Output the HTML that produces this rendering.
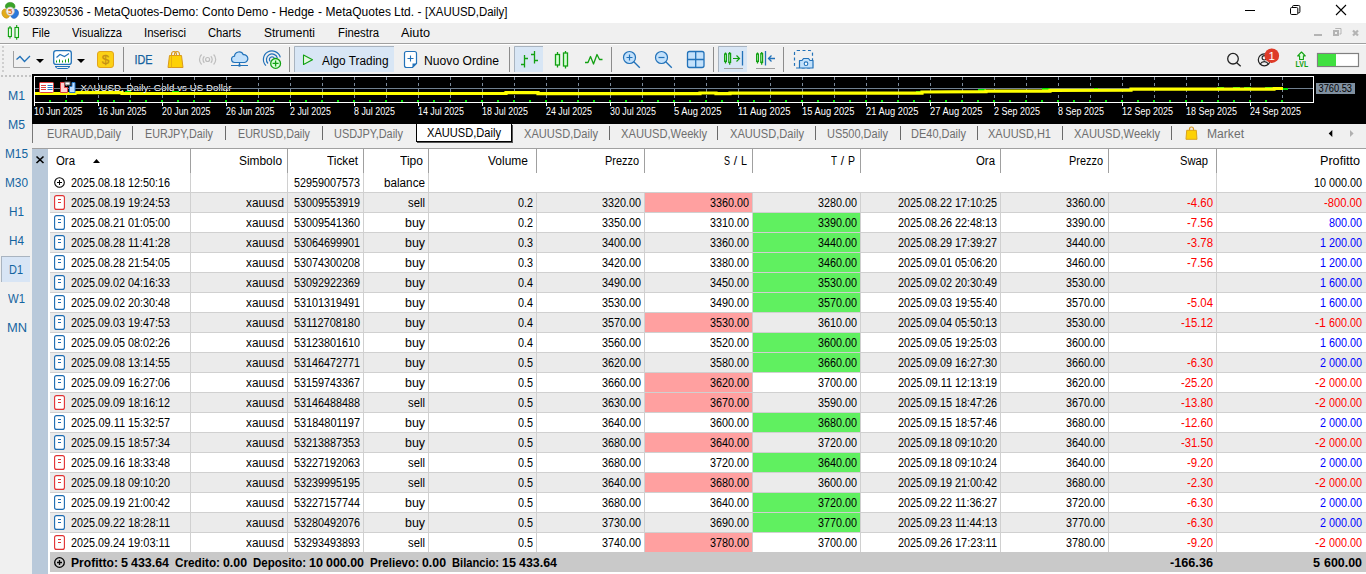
<!DOCTYPE html>
<html><head><meta charset="utf-8"><title>5039230536 - MetaQuotes-Demo</title>
<style>
html,body{margin:0;padding:0}
body{width:1366px;height:574px;overflow:hidden;background:#f0f0f0;font-family:"Liberation Sans",sans-serif;font-size:12px;color:#000;position:relative}
.abs,.abs *{position:absolute}
div{box-sizing:border-box}
#title{left:0;top:0;width:1366px;height:23px;background:#fff}
#title .t{left:23px;top:5px;line-height:14px;white-space:nowrap}
#menu{left:0;top:23px;width:1366px;height:20px;background:#f0f0f0}
#menu .m{top:3px;line-height:14px;white-space:nowrap}
#side{left:0;top:74px;width:32px;height:500px;background:#f0f0f0}
#side .sl2{left:0;width:32px;text-align:center;color:#1464a0;line-height:14px}
#chart{left:32px;top:74px;width:1334px;height:50px;background:#000}
#tabs{left:32px;top:124px;width:1334px;height:24px;background:#f0f0f0}
#tabs .tab{top:3px;line-height:14px;color:#6e6e6e;white-space:nowrap}
#tabs i{top:2px;width:1px;height:14px;background:#6a6a6a}
#strip{left:32px;top:148px;width:17px;border-top:1px solid #a0a0a0;height:426px;background:#b9c9da}
#gridbg{left:48px;top:149px;width:2px;height:425px;background:#fff}
#grid{left:49px;top:148px;width:1317px;height:426px;background:#fff;border-top:1px solid #a0a0a0}
.row{left:0;width:1317px;height:20px;border-bottom:1px solid #d0d0d0}
.row.alt{background:#ebebeb}
.c{top:0;height:19px;line-height:21px;text-align:right;white-space:nowrap;padding-right:3.500px}
.v{top:0;width:1px;height:19px;background:#d0d0d0}
.w{display:inline-block;position:static !important;white-space:pre}
.s{display:inline-block;position:static !important;white-space:pre;transform-origin:0 50%}
.red{color:#f00}.blue{color:#00f}
.sl{background:#ffa0a0}.tp{background:#60f060}
</style></head><body>

<div id="title" class="abs">
<svg style="left:0;top:0" width="22" height="23" viewBox="0 0 22 23"><ellipse cx="10.200" cy="6.300" rx="4.800" ry="3.900" fill="#3aa528" stroke="#2c8a1e" stroke-width=".6"/><ellipse cx="5.800" cy="13.600" rx="3.700" ry="4.700" fill="#e3ac1a" stroke="#c08c12" stroke-width=".6" transform="rotate(-25 5.800 13.600)"/><ellipse cx="14.600" cy="13.800" rx="3.700" ry="4.700" fill="#2a78dc" stroke="#1e5cb4" stroke-width=".6" transform="rotate(25 14.600 13.800)"/><circle cx="10.200" cy="11.300" r="4.200" fill="#f4f0ec" stroke="#b8b0a8" stroke-width=".7"/><text x="10.200" y="14.200" font-size="8" font-weight="bold" text-anchor="middle" fill="#e0741a" font-family="Liberation Sans,sans-serif" style="position:static">5</text></svg>
<div class="t"><span class="w" style="width:60.32px;"><span class="s" style="transform:scaleX(0.904)">5039230536</span></span><span class="w" style="width:3.016px;"> </span><span class="w" style="width:5.027px;text-align:center;">-</span><span class="w" style="width:3.016px;"> </span><span class="w" style="width:104.6px;"><span class="s" style="transform:scaleX(0.999)">MetaQuotes-Demo:</span></span><span class="w" style="width:3.016px;"> </span><span class="w" style="width:32.17px;"><span class="s" style="transform:scaleX(1.005)">Conto</span></span><span class="w" style="width:3.016px;"> </span><span class="w" style="width:31.17px;"><span class="s" style="transform:scaleX(0.974)">Demo</span></span><span class="w" style="width:3.016px;"> </span><span class="w" style="width:5.027px;text-align:center;">-</span><span class="w" style="width:3.016px;"> </span><span class="w" style="width:35.19px;"><span class="s" style="transform:scaleX(0.995)">Hedge</span></span><span class="w" style="width:3.016px;"> </span><span class="w" style="width:5.027px;text-align:center;">-</span><span class="w" style="width:3.016px;"> </span><span class="w" style="width:65.35px;"><span class="s" style="transform:scaleX(1.000)">MetaQuotes</span></span><span class="w" style="width:3.016px;"> </span><span class="w" style="width:20.11px;"><span class="s" style="transform:scaleX(1.005)">Ltd.</span></span><span class="w" style="width:3.016px;"> </span><span class="w" style="width:5.027px;text-align:center;">-</span><span class="w" style="width:3.016px;"> </span><span class="w" style="width:82.44px;"><span class="s" style="transform:scaleX(0.951)">[XAUUSD,Daily]</span></span></div>
<svg style="left:1240px;top:0" width="126" height="23" viewBox="1240 0 126 23"><path d="M1245 10.500h10" stroke="#000" stroke-width="1" fill="none"/><rect x="1290.500" y="7.500" width="7.300" height="7" rx="1.200" fill="none" stroke="#000" stroke-width="1"/><path d="M1292.500 7.500v-.8a1.200 1.200 0 0 1 1.200 -1.200h5a1.200 1.200 0 0 1 1.200 1.200v5a1.200 1.200 0 0 1 -1.200 1.200h-.8" stroke="#000" stroke-width="1" fill="none"/><path d="M1336 5l10 10M1346 5l-10 10" stroke="#000" stroke-width="1.100" fill="none"/></svg>
</div>
<div id="menu" class="abs">
<svg style="left:0;top:0" width="24" height="20" viewBox="0 23 24 20"><g fill="#e4ffe4" stroke="#12a012" stroke-width="1.100"><path d="M10 26v2M10 36.500v2M16.700 25v2.500M16.700 37.500v2.200" fill="none"/><rect x="8.400" y="28" width="3" height="8.500"/><rect x="15" y="27.500" width="3.500" height="10"/></g></svg>
<div class="m" style="left:32px"><span class="w" style="width:18px;"><span class="s" style="transform:scaleX(0.931)">File</span></span></div>
<div class="m" style="left:72px"><span class="w" style="width:50px;"><span class="s" style="transform:scaleX(0.929)">Visualizza</span></span></div>
<div class="m" style="left:144px"><span class="w" style="width:42px;"><span class="s" style="transform:scaleX(0.954)">Inserisci</span></span></div>
<div class="m" style="left:208px"><span class="w" style="width:33px;"><span class="s" style="transform:scaleX(0.934)">Charts</span></span></div>
<div class="m" style="left:264px"><span class="w" style="width:51px;"><span class="s" style="transform:scaleX(0.993)">Strumenti</span></span></div>
<div class="m" style="left:338px"><span class="w" style="width:41px;"><span class="s" style="transform:scaleX(0.946)">Finestra</span></span></div>
<div class="m" style="left:401px"><span class="w" style="width:29px;"><span class="s" style="transform:scaleX(1.060)">Aiuto</span></span></div>
<svg style="left:1306px;top:0" width="60" height="20" viewBox="1306 23 60 20"><rect x="1314" y="34" width="8" height="2" fill="#b4b4b4"/><path d="M1334 31h4v4h-4z" fill="none" stroke="#b4b4b4" stroke-width="2"/><path d="M1335.500 29v-.5h5.500v5.500h-1.500" fill="none" stroke="#b4b4b4" stroke-width="1"/><path d="M1353 30.500l5 5M1358 30.500l-5 5" fill="none" stroke="#b4b4b4" stroke-width="2.200"/></svg>
</div>
<svg class="abs" style="left:0;top:44px" width="1366" height="30" viewBox="0 44 1366 30" font-family="Liberation Sans, sans-serif">
<rect x="2" y="46" width="2" height="2" fill="#cfcfcf"/>
<rect x="2" y="50" width="2" height="2" fill="#cfcfcf"/>
<rect x="2" y="54" width="2" height="2" fill="#cfcfcf"/>
<rect x="2" y="58" width="2" height="2" fill="#cfcfcf"/>
<rect x="2" y="62" width="2" height="2" fill="#cfcfcf"/>
<rect x="2" y="66" width="2" height="2" fill="#cfcfcf"/>
<rect x="2" y="70" width="2" height="2" fill="#cfcfcf"/>
<rect x="123" y="47" width="1" height="25" fill="#8c8c8c"/>
<rect x="289" y="47" width="1" height="25" fill="#8c8c8c"/>
<rect x="509" y="47" width="1" height="25" fill="#8c8c8c"/>
<rect x="611" y="47" width="1" height="25" fill="#8c8c8c"/>
<rect x="713" y="47" width="1" height="25" fill="#8c8c8c"/>
<rect x="783" y="47" width="1" height="25" fill="#8c8c8c"/>
<rect x="294" y="46" width="100" height="26" fill="#d8e6f5"/>
<path d="M294.5 72V46.500H394" fill="none" stroke="#a9b4c0" stroke-width="1"/>
<rect x="514" y="46" width="29" height="26" fill="#d8e6f5"/>
<path d="M514.5 72V46.500H543" fill="none" stroke="#a9b4c0" stroke-width="1"/>
<rect x="718" y="46" width="29" height="26" fill="#d8e6f5"/>
<path d="M718.5 72V46.500H747" fill="none" stroke="#a9b4c0" stroke-width="1"/>
<path d="M13.500 51v16.500H30" fill="none" stroke="#a0a0a0" stroke-width="1"/>
<path d="M16.500 59.500L20 56.500L24.500 61.500L30 56" fill="none" stroke="#2272b9" stroke-width="1.300"/>
<path d="M36 59h8l-4 4z" fill="#000"/>
<rect x="53.700" y="50.600" width="17.600" height="13.800" rx="2.500" fill="#fff" stroke="#2272b9" stroke-width="1.300"/>
<path d="M55 66.500H70M57.500 68.500H67.500M55 66.500L57.500 68.500M70 66.500L67.500 68.500" fill="none" stroke="#2272b9" stroke-width="1"/>
<path d="M56.500 57.500L60 54.500L64.500 56.500L69 53.500" fill="none" stroke="#2272b9" stroke-width="1.100"/>
<rect x="56" y="60.5" width="1" height="2" fill="#12a012"/>
<rect x="59" y="59.5" width="1" height="3" fill="#12a012"/>
<rect x="62" y="60.5" width="1" height="2" fill="#12a012"/>
<rect x="65" y="59.5" width="1" height="3" fill="#12a012"/>
<rect x="68" y="58.5" width="1" height="4" fill="#12a012"/>
<path d="M77 59h8l-4 4z" fill="#000"/>
<rect x="97.500" y="51.500" width="16" height="16" rx="2.500" fill="#fcd116" stroke="#e3a51c" stroke-width="1"/>
<text x="105.500" y="64.300" font-size="13.500" text-anchor="middle" fill="#c48f16" stroke="#c48f16" stroke-width=".3">$</text>
<text x="134.500" y="64" font-size="12" fill="#15629f" stroke="#15629f" stroke-width=".25" textLength="18" lengthAdjust="spacingAndGlyphs">IDE</text>
<path d="M171.500 58v-3.500a2.500 3 0 0 1 5 0v3.500M174.500 58v-3.500a2.500 3 0 0 1 5 0v3.500" fill="none" stroke="#d99a1e" stroke-width="1.100"/>
<path d="M169.500 55.500h12l1.500 12h-15z" fill="#fdd106" stroke="#d99a1e" stroke-width="1"/>
<path d="M171.500 56v11.500" stroke="#e6b010" stroke-width="1" fill="none"/>
<g fill="none" stroke="#bdbdbd" stroke-width="1.200"><circle cx="207.600" cy="59.500" r="2"/><path d="M204.400 56.200a4.600 4.600 0 0 0 0 6.600M210.800 56.200a4.600 4.600 0 0 1 0 6.600M201.600 54.500a7 7 0 0 0 0 10M213.600 54.500a7 7 0 0 1 0 10"/></g>
<path d="M235 62.500a3.200 3.200 0 0 1 -.5 -6.400a4.600 4.600 0 0 1 8.800 -1.400a3.900 3.900 0 0 1 1.200 7.800z" fill="#c3e1fb" stroke="#2272b9" stroke-width="1.200"/>
<path d="M239.500 62.500v3M231 65.500h17" stroke="#2272b9" stroke-width="1.200" fill="none"/><circle cx="239.500" cy="65.500" r="1.300" fill="#2272b9"/>
<g fill="none" stroke="#2272b9" stroke-width="1.200"><path d="M265.900 65.600A8.600 8.600 0 1 1 280.300 57.300"/><path d="M268 63.500A5.600 5.600 0 1 1 277.400 58.050"/><path d="M270.200 61.300A2.600 2.600 0 1 1 274.500 58.800"/></g>
<circle cx="275.600" cy="63.400" r="4.900" fill="#d8ffd8" stroke="#12a012" stroke-width="1.300"/><path d="M272.600 63.400h6M275.600 60.400v6" stroke="#12a012" stroke-width="1.300"/>
<path d="M303.500 55v9.500l9 -4.750z" fill="#e4f8e0" stroke="#12a012" stroke-width="1.100" stroke-linejoin="round"/>
<text x="322" y="64.600" font-size="12.500" fill="#000" textLength="66.500" lengthAdjust="spacingAndGlyphs">Algo Trading</text>
<path d="M406.500 51.500h8a2 2 0 0 1 2 2v10l-4 4h-6a2 2 0 0 1 -2 -2v-12a2 2 0 0 1 2 -2z" fill="#fff" stroke="#2272b9" stroke-width="1.200"/><path d="M412.500 67.500v-4h4z" fill="#2272b9"/>
<path d="M407.500 58.500h6M410.500 55.500v6" stroke="#2272b9" stroke-width="1.100" fill="none"/>
<text x="424" y="64.600" font-size="12.500" fill="#000" textLength="75" lengthAdjust="spacingAndGlyphs">Nuovo Ordine</text>
<path d="M524.500 55v12.500M521 64.500h3.500M524.500 58.500h3.500M534.500 51v12.500M531 54.500h3.500M534.500 60.500h3.500" fill="none" stroke="#12a012" stroke-width="1.300"/>
<g fill="#d5ffd5" stroke="#12a012" stroke-width="1.300"><path d="M557.500 52v2.500M557.500 65v2.500M565.500 51v2M565.500 66v2.500" fill="none"/><rect x="555.500" y="54.500" width="4" height="10.500"/><rect x="563.500" y="53" width="4" height="13"/></g>
<path d="M585 62.500h3l2.500 -6l3 7.500l3.500 -9.500l2.500 5h3" fill="none" stroke="#12a012" stroke-width="1.300" stroke-linejoin="round"/>
<circle cx="629.5" cy="57.500" r="6" fill="#c3e1fb" stroke="#2272b9" stroke-width="1.200"/>
<path d="M633.8 61.800l6 6" stroke="#2272b9" stroke-width="1.300" fill="none"/>
<path d="M626.5 57.500h6M629.5 54.500v6" stroke="#2272b9" stroke-width="1.200" fill="none"/>
<circle cx="661.5" cy="57.500" r="6" fill="#c3e1fb" stroke="#2272b9" stroke-width="1.200"/>
<path d="M665.8 61.800l6 6" stroke="#2272b9" stroke-width="1.300" fill="none"/>
<path d="M658.5 57.500h6" stroke="#2272b9" stroke-width="1.200" fill="none"/>
<rect x="687.500" y="51.500" width="16.500" height="16" rx="2" fill="#c3e1fb" stroke="#2272b9" stroke-width="1.300"/><path d="M695.700 51.500v16M687.500 59.500h16.500" stroke="#2272b9" stroke-width="1.300"/>
<g fill="#d5ffd5" stroke="#12a012" stroke-width="1.200"><path d="M725.5 52.500v1.500M725.5 61.500v2M729.7 52v1.500M729.7 62.500v2.200" fill="none"/><rect x="724.6" y="54" width="1.800" height="7.500"/><rect x="728.8" y="53.500" width="1.800" height="9"/></g>
<path d="M733 58.500h6M736.500 55.500l3 3l-3 3" fill="none" stroke="#12a012" stroke-width="1.200"/>
<path d="M742.500 51v14.500" stroke="#2272b9" stroke-width="1.300"/><path d="M724 68.500h19" stroke="#a0a0a0" stroke-width="1"/>
<g fill="#d5ffd5" stroke="#12a012" stroke-width="1.200"><path d="M757.5 52.500v1.500M757.5 61.500v2M761.7 52v1.500M761.7 62.500v2.200" fill="none"/><rect x="756.6" y="54" width="1.800" height="7.500"/><rect x="760.8" y="53.500" width="1.800" height="9"/></g>
<path d="M765.500 51v14.500M775 58.500h-6.500M771.500 55.500l-3 3l3 3" fill="none" stroke="#2272b9" stroke-width="1.300"/><path d="M756 68.500h19" stroke="#a0a0a0" stroke-width="1"/>
<rect x="794.500" y="50.500" width="18" height="17.500" rx="2.500" fill="none" stroke="#2272b9" stroke-width="1.200" stroke-dasharray="3 2.500"/>
<path d="M799.500 60.500h2.500l1.500 -2h5l1.500 2h3v7.500h-13.500z" fill="#c3e1fb" stroke="#2272b9" stroke-width="1.200" stroke-linejoin="round"/><circle cx="806" cy="63.700" r="1.800" fill="#fff" stroke="#2272b9" stroke-width="1.100"/>
<circle cx="1233" cy="58.700" r="5.300" fill="none" stroke="#222" stroke-width="1.300"/><path d="M1236.700 62.700l4 3.500" stroke="#222" stroke-width="1.300"/>
<circle cx="1264.300" cy="59.800" r="6" fill="none" stroke="#222" stroke-width="1.200"/><circle cx="1264.300" cy="57.800" r="2.200" fill="none" stroke="#222" stroke-width="1.100"/><path d="M1260.300 64.100a4.500 4.500 0 0 1 8 0" fill="none" stroke="#222" stroke-width="1.100"/>
<circle cx="1271.800" cy="55.700" r="7.300" fill="#de3b28"/><text x="1271.600" y="60" font-size="11.500" text-anchor="middle" fill="#fff">1</text>
<path d="M1301.500 52l3.800 3.900h-1.900v3.600h-3.800v-3.600h-1.900z" fill="#dcffdc" stroke="#12a012" stroke-width="1.100" stroke-linejoin="round"/>
<text x="1295.600" y="67" font-size="8.200" font-weight="bold" fill="#12a012" textLength="12.600" lengthAdjust="spacingAndGlyphs">LVL</text>
<rect x="1317.500" y="53.500" width="41" height="13" fill="#fff" stroke="#808080" stroke-width="1.200"/><rect x="1318" y="54" width="18" height="12" fill="#40e040"/>
</svg>
<div class="abs" style="left:0;top:43px;width:1366px;height:1px;background:#a0a0a0"></div>
<div class="abs" style="left:0;top:44px;width:1366px;height:1px;background:#fff"></div>
<div id="side" class="abs">
<div style="left:1px;top:1px;width:30px;height:2px;background:repeating-linear-gradient(90deg,#c4c4c4 0 2px,transparent 2px 4px)"></div>
<div style="left:1px;top:182px;width:29px;height:26px;background:#d8e5f5;border-top:1px solid #a9b4c0;border-left:1px solid #a9b4c0"></div>
<div class="sl2" style="top:15px"><span class="w" style="width:17px;"><span class="s" style="transform:scaleX(1.020)">M1</span></span></div>
<div class="sl2" style="top:44px"><span class="w" style="width:17px;"><span class="s" style="transform:scaleX(1.020)">M5</span></span></div>
<div class="sl2" style="top:73px"><span class="w" style="width:23px;"><span class="s" style="transform:scaleX(0.985)">M15</span></span></div>
<div class="sl2" style="top:102px"><span class="w" style="width:23px;"><span class="s" style="transform:scaleX(0.985)">M30</span></span></div>
<div class="sl2" style="top:131px"><span class="w" style="width:15px;"><span class="s" style="transform:scaleX(0.978)">H1</span></span></div>
<div class="sl2" style="top:160px"><span class="w" style="width:15px;"><span class="s" style="transform:scaleX(0.978)">H4</span></span></div>
<div class="sl2" style="top:189px"><span class="w" style="width:14px;"><span class="s" style="transform:scaleX(0.913)">D1</span></span></div>
<div class="sl2" style="top:218px"><span class="w" style="width:17px;"><span class="s" style="transform:scaleX(0.944)">W1</span></span></div>
<div class="sl2" style="top:247px"><span class="w" style="width:20px;"><span class="s" style="transform:scaleX(1.072)">MN</span></span></div>
</div>
<svg class="abs" style="left:32px;top:74px" width="1334" height="50" viewBox="32 74 1334 50" font-family="Liberation Sans, sans-serif">
<rect x="32" y="74" width="1334" height="50" fill="#000"/>
<path d="M66.5 77V102M98.5 77V102M130.5 77V102M162.5 77V102M194.5 77V102M226.5 77V102M258.5 77V102M290.5 77V102M322.5 77V102M354.5 77V102M386.5 77V102M418.5 77V102M450.5 77V102M482.5 77V102M514.5 77V102M546.5 77V102M578.5 77V102M610.5 77V102M642.5 77V102M674.5 77V102M706.5 77V102M738.5 77V102M770.5 77V102M802.5 77V102M834.5 77V102M866.5 77V102M898.5 77V102M930.5 77V102M962.5 77V102M994.5 77V102M1026.5 77V102M1058.5 77V102M1090.5 77V102M1122.5 77V102M1154.5 77V102M1186.5 77V102M1218.5 77V102M1250.5 77V102M1282.5 77V102" stroke="#7c8a9a" stroke-width="1" stroke-dasharray="3 3" fill="none"/>
<path d="M35 88.500H1313" stroke="#708090" stroke-width="1"/>
<rect x="125" y="91" width="6" height="2" fill="#00e000"/>
<rect x="172" y="91" width="7" height="2" fill="#00e000"/>
<rect x="505" y="91" width="8" height="2" fill="#00e000"/>
<rect x="540" y="92" width="8" height="2" fill="#00e000"/>
<rect x="700" y="92" width="8" height="2" fill="#00e000"/>
<rect x="718" y="92" width="6" height="2" fill="#00e000"/>
<rect x="916" y="91" width="8" height="2" fill="#00e000"/>
<rect x="978" y="89" width="8" height="2" fill="#00e000"/>
<rect x="1042" y="88" width="8" height="2" fill="#00e000"/>
<rect x="1094" y="88" width="4" height="2" fill="#00e000"/>
<rect x="1217" y="87" width="7" height="2" fill="#00e000"/>
<rect x="1233" y="87" width="7" height="2" fill="#00e000"/>
<rect x="1244" y="87" width="7" height="2" fill="#00e000"/>
<rect x="1265" y="87" width="7" height="2" fill="#00e000"/>
<rect x="1283" y="88" width="5" height="2" fill="#00e000"/>
<polyline points="35,93.5 75,93.5 75,92.7 122,92.7 122,93.5 506,93.5 506,92.6 538,92.6 538,93.6 700,93.6 700,93 716,93 716,93.6 730,93.6 730,93.2 922,93.2 922,92 986,91.6 986,91.2 1050,91.2 1050,90.4 1131,90.2 1131,89.2 1274,89.2 1274,88.5 1283,88.5" fill="none" stroke="#ffff00" stroke-width="3.200"/>
<rect x="34.500" y="76.500" width="1279" height="26" fill="none" stroke="#fff" stroke-width="1"/>
<rect x="49" y="100" width="2" height="2" fill="#00e000"/>
<rect x="65" y="100" width="2" height="2" fill="#00e000"/>
<rect x="81" y="100" width="2" height="2" fill="#00e000"/>
<rect x="97" y="100" width="2" height="2" fill="#00e000"/>
<rect x="113" y="100" width="2" height="2" fill="#00e000"/>
<rect x="129" y="100" width="2" height="2" fill="#00e000"/>
<rect x="145" y="100" width="2" height="2" fill="#00e000"/>
<rect x="161" y="100" width="2" height="2" fill="#00e000"/>
<rect x="177" y="100" width="2" height="2" fill="#00e000"/>
<rect x="193" y="100" width="2" height="2" fill="#00e000"/>
<rect x="209" y="100" width="2" height="2" fill="#00e000"/>
<rect x="225" y="100" width="2" height="2" fill="#00e000"/>
<rect x="241" y="100" width="2" height="2" fill="#00e000"/>
<rect x="257" y="100" width="2" height="2" fill="#00e000"/>
<rect x="273" y="100" width="2" height="2" fill="#00e000"/>
<rect x="289" y="100" width="2" height="2" fill="#00e000"/>
<rect x="305" y="100" width="2" height="2" fill="#00e000"/>
<rect x="321" y="100" width="2" height="2" fill="#00e000"/>
<rect x="337" y="100" width="2" height="2" fill="#00e000"/>
<rect x="353" y="100" width="2" height="2" fill="#00e000"/>
<rect x="369" y="100" width="2" height="2" fill="#00e000"/>
<rect x="385" y="100" width="2" height="2" fill="#00e000"/>
<rect x="401" y="100" width="2" height="2" fill="#00e000"/>
<rect x="417" y="100" width="2" height="2" fill="#00e000"/>
<rect x="433" y="100" width="2" height="2" fill="#00e000"/>
<rect x="449" y="100" width="2" height="2" fill="#00e000"/>
<rect x="465" y="100" width="2" height="2" fill="#00e000"/>
<rect x="481" y="100" width="2" height="2" fill="#00e000"/>
<rect x="497" y="100" width="2" height="2" fill="#00e000"/>
<rect x="513" y="100" width="2" height="2" fill="#00e000"/>
<rect x="529" y="100" width="2" height="2" fill="#00e000"/>
<rect x="545" y="100" width="2" height="2" fill="#00e000"/>
<rect x="561" y="100" width="2" height="2" fill="#00e000"/>
<rect x="577" y="100" width="2" height="2" fill="#00e000"/>
<rect x="593" y="100" width="2" height="2" fill="#00e000"/>
<rect x="609" y="100" width="2" height="2" fill="#00e000"/>
<rect x="625" y="100" width="2" height="2" fill="#00e000"/>
<rect x="641" y="100" width="2" height="2" fill="#00e000"/>
<rect x="657" y="100" width="2" height="2" fill="#00e000"/>
<rect x="673" y="100" width="2" height="2" fill="#00e000"/>
<rect x="689" y="100" width="2" height="2" fill="#00e000"/>
<rect x="705" y="100" width="2" height="2" fill="#00e000"/>
<rect x="721" y="100" width="2" height="2" fill="#00e000"/>
<rect x="737" y="100" width="2" height="2" fill="#00e000"/>
<rect x="753" y="100" width="2" height="2" fill="#00e000"/>
<rect x="769" y="100" width="2" height="2" fill="#00e000"/>
<rect x="785" y="100" width="2" height="2" fill="#00e000"/>
<rect x="801" y="100" width="2" height="2" fill="#00e000"/>
<rect x="817" y="100" width="2" height="2" fill="#00e000"/>
<rect x="833" y="100" width="2" height="2" fill="#00e000"/>
<rect x="849" y="100" width="2" height="2" fill="#00e000"/>
<rect x="865" y="100" width="2" height="2" fill="#00e000"/>
<rect x="881" y="100" width="2" height="2" fill="#00e000"/>
<rect x="897" y="100" width="2" height="2" fill="#00e000"/>
<rect x="913" y="100" width="2" height="2" fill="#00e000"/>
<rect x="929" y="100" width="2" height="2" fill="#00e000"/>
<rect x="945" y="100" width="2" height="2" fill="#00e000"/>
<rect x="961" y="100" width="2" height="2" fill="#00e000"/>
<rect x="977" y="100" width="2" height="2" fill="#00e000"/>
<rect x="993" y="100" width="2" height="2" fill="#00e000"/>
<rect x="1009" y="100" width="2" height="2" fill="#00e000"/>
<rect x="1025" y="100" width="2" height="2" fill="#00e000"/>
<rect x="1041" y="100" width="2" height="2" fill="#00e000"/>
<rect x="1057" y="100" width="2" height="2" fill="#00e000"/>
<rect x="1073" y="100" width="2" height="2" fill="#00e000"/>
<rect x="1089" y="100" width="2" height="2" fill="#00e000"/>
<rect x="1105" y="100" width="2" height="2" fill="#00e000"/>
<rect x="1121" y="100" width="2" height="2" fill="#00e000"/>
<rect x="1137" y="100" width="2" height="2" fill="#00e000"/>
<rect x="1153" y="100" width="2" height="2" fill="#00e000"/>
<rect x="1169" y="100" width="2" height="2" fill="#00e000"/>
<rect x="1185" y="100" width="2" height="2" fill="#00e000"/>
<rect x="1201" y="100" width="2" height="2" fill="#00e000"/>
<rect x="1217" y="100" width="2" height="2" fill="#00e000"/>
<rect x="1233" y="100" width="2" height="2" fill="#00e000"/>
<rect x="1249" y="100" width="2" height="2" fill="#00e000"/>
<rect x="1265" y="100" width="2" height="2" fill="#00e000"/>
<rect x="1281" y="100" width="2" height="2" fill="#00e000"/>
<rect x="34" y="102" width="1" height="4" fill="#fff"/>
<text x="34" y="115" font-size="10" fill="#fff" textLength="48.5" lengthAdjust="spacingAndGlyphs">10 Jun 2025</text>
<rect x="98" y="102" width="1" height="4" fill="#fff"/>
<text x="98" y="115" font-size="10" fill="#fff" textLength="48.5" lengthAdjust="spacingAndGlyphs">16 Jun 2025</text>
<rect x="162" y="102" width="1" height="4" fill="#fff"/>
<text x="162" y="115" font-size="10" fill="#fff" textLength="48.5" lengthAdjust="spacingAndGlyphs">20 Jun 2025</text>
<rect x="226" y="102" width="1" height="4" fill="#fff"/>
<text x="226" y="115" font-size="10" fill="#fff" textLength="48.5" lengthAdjust="spacingAndGlyphs">26 Jun 2025</text>
<rect x="290" y="102" width="1" height="4" fill="#fff"/>
<text x="290" y="115" font-size="10" fill="#fff" textLength="41" lengthAdjust="spacingAndGlyphs">2 Jul 2025</text>
<rect x="354" y="102" width="1" height="4" fill="#fff"/>
<text x="354" y="115" font-size="10" fill="#fff" textLength="41" lengthAdjust="spacingAndGlyphs">8 Jul 2025</text>
<rect x="418" y="102" width="1" height="4" fill="#fff"/>
<text x="418" y="115" font-size="10" fill="#fff" textLength="46" lengthAdjust="spacingAndGlyphs">14 Jul 2025</text>
<rect x="482" y="102" width="1" height="4" fill="#fff"/>
<text x="482" y="115" font-size="10" fill="#fff" textLength="46" lengthAdjust="spacingAndGlyphs">18 Jul 2025</text>
<rect x="546" y="102" width="1" height="4" fill="#fff"/>
<text x="546" y="115" font-size="10" fill="#fff" textLength="46" lengthAdjust="spacingAndGlyphs">24 Jul 2025</text>
<rect x="610" y="102" width="1" height="4" fill="#fff"/>
<text x="610" y="115" font-size="10" fill="#fff" textLength="46" lengthAdjust="spacingAndGlyphs">30 Jul 2025</text>
<rect x="674" y="102" width="1" height="4" fill="#fff"/>
<text x="674" y="115" font-size="10" fill="#fff" textLength="47.5" lengthAdjust="spacingAndGlyphs">5 Aug 2025</text>
<rect x="738" y="102" width="1" height="4" fill="#fff"/>
<text x="738" y="115" font-size="10" fill="#fff" textLength="52.5" lengthAdjust="spacingAndGlyphs">11 Aug 2025</text>
<rect x="802" y="102" width="1" height="4" fill="#fff"/>
<text x="802" y="115" font-size="10" fill="#fff" textLength="52.5" lengthAdjust="spacingAndGlyphs">15 Aug 2025</text>
<rect x="866" y="102" width="1" height="4" fill="#fff"/>
<text x="866" y="115" font-size="10" fill="#fff" textLength="52.5" lengthAdjust="spacingAndGlyphs">21 Aug 2025</text>
<rect x="930" y="102" width="1" height="4" fill="#fff"/>
<text x="930" y="115" font-size="10" fill="#fff" textLength="52.5" lengthAdjust="spacingAndGlyphs">27 Aug 2025</text>
<rect x="994" y="102" width="1" height="4" fill="#fff"/>
<text x="994" y="115" font-size="10" fill="#fff" textLength="46" lengthAdjust="spacingAndGlyphs">2 Sep 2025</text>
<rect x="1058" y="102" width="1" height="4" fill="#fff"/>
<text x="1058" y="115" font-size="10" fill="#fff" textLength="46" lengthAdjust="spacingAndGlyphs">8 Sep 2025</text>
<rect x="1122" y="102" width="1" height="4" fill="#fff"/>
<text x="1122" y="115" font-size="10" fill="#fff" textLength="51" lengthAdjust="spacingAndGlyphs">12 Sep 2025</text>
<rect x="1186" y="102" width="1" height="4" fill="#fff"/>
<text x="1186" y="115" font-size="10" fill="#fff" textLength="51" lengthAdjust="spacingAndGlyphs">18 Sep 2025</text>
<rect x="1250" y="102" width="1" height="4" fill="#fff"/>
<text x="1250" y="115" font-size="10" fill="#fff" textLength="51" lengthAdjust="spacingAndGlyphs">24 Sep 2025</text>
<rect x="39.500" y="82.500" width="14" height="10" rx="1" fill="#fff" stroke="#e04040" stroke-width="1"/><path d="M41 85.500h5M41 87.500h5M41 89.500h5" stroke="#e04040" stroke-width="1"/><path d="M47.500 85.500h5M47.500 87.500h5M47.500 89.500h5" stroke="#2878c8" stroke-width="1"/>
<path d="M60.500 82.500h4v5h3v5h-7z" fill="#ffd0d0" stroke="#e04040" stroke-width="1"/><path d="M69.500 92.500v-6h2.500v-4h3v10z" fill="#c0e0ff" stroke="#2878c8" stroke-width="1"/><rect x="65" y="82" width="5" height="3" fill="#fff" stroke="#666" stroke-width="1"/>
<text x="80.500" y="91.300" font-size="9.600" fill="#fff" textLength="151" lengthAdjust="spacing">XAUUSD, Daily:  Gold vs US Dollar</text>
<path d="M80 88.500H232" stroke="#8090a0" stroke-width="1"/>
<rect x="1316" y="83" width="39" height="11" fill="#8090a0"/><text x="1318.500" y="92.300" font-size="10" fill="#000" textLength="33.500" lengthAdjust="spacingAndGlyphs">3760.53</text>
</svg>
<div id="tabs" class="abs">
<div style="left:0;top:0;width:1px;height:19px;background:#787878"></div>
<div style="left:384px;top:0;width:96px;height:18px;background:#fff;border:1px solid #000;border-top:none;box-shadow:1px 1px 0 #555"></div>
<div class="tab" style="left:15px;"><span class="w" style="width:74px;"><span class="s" style="transform:scaleX(0.917)">EURAUD,Daily</span></span></div>
<div class="tab" style="left:113px;"><span class="w" style="width:68px;"><span class="s" style="transform:scaleX(0.897)">EURJPY,Daily</span></span></div>
<div class="tab" style="left:206px;"><span class="w" style="width:72px;"><span class="s" style="transform:scaleX(0.892)">EURUSD,Daily</span></span></div>
<div class="tab" style="left:302px;"><span class="w" style="width:69px;"><span class="s" style="transform:scaleX(0.910)">USDJPY,Daily</span></span></div>
<div class="tab" style="left:395px;color:#000;top:2px;"><span class="w" style="width:74px;"><span class="s" style="transform:scaleX(0.925)">XAUUSD,Daily</span></span></div>
<div class="tab" style="left:492px;"><span class="w" style="width:74px;"><span class="s" style="transform:scaleX(0.925)">XAUUSD,Daily</span></span></div>
<div class="tab" style="left:589px;"><span class="w" style="width:86px;"><span class="s" style="transform:scaleX(0.930)">XAUUSD,Weekly</span></span></div>
<div class="tab" style="left:698px;"><span class="w" style="width:74px;"><span class="s" style="transform:scaleX(0.925)">XAUUSD,Daily</span></span></div>
<div class="tab" style="left:795px;"><span class="w" style="width:61px;"><span class="s" style="transform:scaleX(0.915)">US500,Daily</span></span></div>
<div class="tab" style="left:879px;"><span class="w" style="width:55px;"><span class="s" style="transform:scaleX(0.916)">DE40,Daily</span></span></div>
<div class="tab" style="left:956px;"><span class="w" style="width:63px;"><span class="s" style="transform:scaleX(0.917)">XAUUSD,H1</span></span></div>
<div class="tab" style="left:1042px;"><span class="w" style="width:86px;"><span class="s" style="transform:scaleX(0.930)">XAUUSD,Weekly</span></span></div>
<div class="tab" style="left:1175px;"><span class="w" style="width:37px;"><span class="s" style="transform:scaleX(1.009)">Market</span></span></div>
<i style="left:100px"></i>
<i style="left:193px"></i>
<i style="left:290px"></i>
<i style="left:577px"></i>
<i style="left:685px"></i>
<i style="left:783px"></i>
<i style="left:868px"></i>
<i style="left:945px"></i>
<i style="left:1030px"></i>
<i style="left:1139px"></i>
<svg style="left:1150px;top:0" width="20" height="24" viewBox="1182 124 20 24"><path d="M1189.500 131v-2a2 2 0 0 1 4 0v2" fill="none" stroke="#d99a1e" stroke-width="1.200"/><path d="M1186.700 130.300h9.600l.7 9h-11z" fill="#fdd106" stroke="#dba31c" stroke-width="1"/></svg>
<svg style="left:1288px;top:0" width="46" height="24" viewBox="1320 124 46 24"><path d="M1332.300 130v7l-3.600 -3.500z" fill="#000"/><path d="M1350 130v7l3.600 -3.500z" fill="#b0b0b0"/></svg>
</div>
<div id="strip" class="abs"></div>
<div id="grid" class="abs">
<div style="left:0;top:0;width:1317px;height:24px;background:#fff"></div>
<div class="c" style="left:0px;width:141px;top:2px;text-align:left;padding-left:7px"><span class="w" style="width:19px;"><span class="s" style="transform:scaleX(0.950)">Ora</span></span></div>
<div class="c" style="left:142px;width:96px;top:2px;padding-right:5px"><span class="w" style="width:43px;"><span class="s" style="transform:scaleX(0.992)">Simbolo</span></span></div>
<div class="c" style="left:239px;width:75px;top:2px;padding-right:5px"><span class="w" style="width:31px;"><span class="s" style="transform:scaleX(0.982)">Ticket</span></span></div>
<div class="c" style="left:315px;width:64px;top:2px;padding-right:5px"><span class="w" style="width:23px;"><span class="s" style="transform:scaleX(1.004)">Tipo</span></span></div>
<div class="c" style="left:380px;width:107px;top:2px;padding-right:8px"><span class="w" style="width:40px;"><span class="s" style="transform:scaleX(0.999)">Volume</span></span></div>
<div class="c" style="left:488px;width:107px;top:2px;padding-right:5px"><span class="w" style="width:34px;"><span class="s" style="transform:scaleX(0.910)">Prezzo</span></span></div>
<div class="c" style="left:596px;width:107px;top:2px;padding-right:5px"><span class="w" style="width:6px;"><span class="s" style="transform:scaleX(0.750)">S</span></span><span class="w" style="width:3px;"> </span><span class="w" style="width:5px;text-align:center;">/</span><span class="w" style="width:3px;"> </span><span class="w" style="width:6px;"><span class="s" style="transform:scaleX(0.899)">L</span></span></div>
<div class="c" style="left:704px;width:107px;top:2px;padding-right:5px"><span class="w" style="width:6px;"><span class="s" style="transform:scaleX(0.819)">T</span></span><span class="w" style="width:3px;"> </span><span class="w" style="width:5px;text-align:center;">/</span><span class="w" style="width:3px;"> </span><span class="w" style="width:7px;"><span class="s" style="transform:scaleX(0.875)">P</span></span></div>
<div class="c" style="left:812px;width:139px;top:2px;padding-right:5px"><span class="w" style="width:19px;"><span class="s" style="transform:scaleX(0.950)">Ora</span></span></div>
<div class="c" style="left:952px;width:107px;top:2px;padding-right:5px"><span class="w" style="width:34px;"><span class="s" style="transform:scaleX(0.910)">Prezzo</span></span></div>
<div class="c" style="left:1060px;width:107px;top:2px;padding-right:8px"><span class="w" style="width:28px;"><span class="s" style="transform:scaleX(0.933)">Swap</span></span></div>
<div class="c" style="left:1168px;width:149px;top:2px;padding-right:8px"><span class="w" style="width:40px;"><span class="s" style="transform:scaleX(1.052)">Profitto</span></span></div>
<div class="v" style="left:141px;top:0;height:24px;background:#a0a0a0"></div>
<div class="v" style="left:238px;top:0;height:24px;background:#a0a0a0"></div>
<div class="v" style="left:314px;top:0;height:24px;background:#a0a0a0"></div>
<div class="v" style="left:379px;top:0;height:24px;background:#a0a0a0"></div>
<div class="v" style="left:487px;top:0;height:24px;background:#a0a0a0"></div>
<div class="v" style="left:595px;top:0;height:24px;background:#a0a0a0"></div>
<div class="v" style="left:703px;top:0;height:24px;background:#a0a0a0"></div>
<div class="v" style="left:811px;top:0;height:24px;background:#a0a0a0"></div>
<div class="v" style="left:951px;top:0;height:24px;background:#a0a0a0"></div>
<div class="v" style="left:1059px;top:0;height:24px;background:#a0a0a0"></div>
<div class="v" style="left:1167px;top:0;height:24px;background:#a0a0a0"></div>
<svg style="left:44px;top:9.500px" width="7" height="4" viewBox="0 0 7 4"><path d="M0 4L3.500 0L7 4z" fill="#000"/></svg>
<div class="row" style="top:24px">
<svg style="left:5px;top:4px" width="11" height="11" viewBox="0 0 11 11"><circle cx="5.500" cy="5.500" r="4.800" fill="none" stroke="#000" stroke-width="1.100"/><path d="M3 5.500h5M5.500 3v5" stroke="#000" stroke-width="1"/></svg>
<div class="c" style="left:0px;width:141px;text-align:left;padding-left:22px;"><span class="w" style="width:54px;"><span class="s" style="transform:scaleX(0.899)">2025.08.18</span></span><span class="w" style="width:3px;"> </span><span class="w" style="width:42px;"><span class="s" style="transform:scaleX(0.899)">12:50:16</span></span></div>
<div class="c" style="left:142px;width:96px;"></div>
<div class="c" style="left:239px;width:75px;text-align:left;padding-left:6px;"><span class="w" style="width:66px;"><span class="s" style="transform:scaleX(0.899)">52959007573</span></span></div>
<div class="c" style="left:315px;width:64px;"><span class="w" style="width:41px;"><span class="s" style="transform:scaleX(0.975)">balance</span></span></div>
<div class="c" style="left:380px;width:107px;padding-right:3.500px;"></div>
<div class="c" style="left:488px;width:107px;padding-right:3.500px;"></div>
<div class="c" style="left:596px;width:107px;padding-right:3.500px;"></div>
<div class="c" style="left:704px;width:107px;padding-right:3.500px;"></div>
<div class="c" style="left:812px;width:139px;padding-right:3.500px;"></div>
<div class="c" style="left:952px;width:107px;padding-right:3.500px;"></div>
<div class="c red" style="left:1060px;width:107px;padding-right:3.500px;"></div>
<div class="c" style="left:1168px;width:149px;padding-right:4.500px;"><span class="w" style="width:12px;"><span class="s" style="transform:scaleX(0.899)">10</span></span><span class="w" style="width:3px;"> </span><span class="w" style="width:33px;"><span class="s" style="transform:scaleX(0.899)">000.00</span></span></div>
<div class="v" style="left:141px"></div>
<div class="v" style="left:238px"></div>
<div class="v" style="left:314px"></div>
<div class="v" style="left:379px"></div>
<div class="v" style="left:1167px"></div>
</div>
<div class="row alt" style="top:44px">
<svg style="left:5px;top:2px" width="11" height="15" viewBox="0 0 11 15"><rect x="0.600" y="0.600" width="9.800" height="13.800" rx="2" fill="#fff" stroke="#e03030" stroke-width="1.100"/><path d="M4 4.500h3M4 7.500h3" stroke="#e03030" stroke-width="1"/></svg>
<div class="c" style="left:0px;width:141px;text-align:left;padding-left:22px;"><span class="w" style="width:54px;"><span class="s" style="transform:scaleX(0.899)">2025.08.19</span></span><span class="w" style="width:3px;"> </span><span class="w" style="width:42px;"><span class="s" style="transform:scaleX(0.899)">19:24:53</span></span></div>
<div class="c" style="left:142px;width:96px;"><span class="w" style="width:38px;"><span class="s" style="transform:scaleX(0.982)">xauusd</span></span></div>
<div class="c" style="left:239px;width:75px;text-align:left;padding-left:6px;"><span class="w" style="width:66px;"><span class="s" style="transform:scaleX(0.899)">53009553919</span></span></div>
<div class="c" style="left:315px;width:64px;"><span class="w" style="width:17px;"><span class="s" style="transform:scaleX(0.944)">sell</span></span></div>
<div class="c" style="left:380px;width:107px;padding-right:3.500px;"><span class="w" style="width:15px;"><span class="s" style="transform:scaleX(0.899)">0.2</span></span></div>
<div class="c" style="left:488px;width:107px;padding-right:3.500px;"><span class="w" style="width:39px;"><span class="s" style="transform:scaleX(0.899)">3320.00</span></span></div>
<div class="c sl" style="left:596px;width:107px;padding-right:3.500px;"><span class="w" style="width:39px;"><span class="s" style="transform:scaleX(0.899)">3360.00</span></span></div>
<div class="c" style="left:704px;width:107px;padding-right:3.500px;"><span class="w" style="width:39px;"><span class="s" style="transform:scaleX(0.899)">3280.00</span></span></div>
<div class="c" style="left:812px;width:139px;padding-right:3.500px;"><span class="w" style="width:54px;"><span class="s" style="transform:scaleX(0.899)">2025.08.22</span></span><span class="w" style="width:3px;"> </span><span class="w" style="width:42px;"><span class="s" style="transform:scaleX(0.899)">17:10:25</span></span></div>
<div class="c" style="left:952px;width:107px;padding-right:3.500px;"><span class="w" style="width:39px;"><span class="s" style="transform:scaleX(0.899)">3360.00</span></span></div>
<div class="c red" style="left:1060px;width:107px;padding-right:3.500px;"><span class="w" style="width:26px;"><span class="s" style="transform:scaleX(0.951)">-4.60</span></span></div>
<div class="c red" style="left:1168px;width:149px;padding-right:4.500px;"><span class="w" style="width:38px;"><span class="s" style="transform:scaleX(0.934)">-800.00</span></span></div>
<div class="v" style="left:141px"></div>
<div class="v" style="left:238px"></div>
<div class="v" style="left:314px"></div>
<div class="v" style="left:379px"></div>
<div class="v" style="left:487px"></div>
<div class="v" style="left:595px"></div>
<div class="v" style="left:703px"></div>
<div class="v" style="left:811px"></div>
<div class="v" style="left:951px"></div>
<div class="v" style="left:1059px"></div>
<div class="v" style="left:1167px"></div>
</div>
<div class="row" style="top:64px">
<svg style="left:5px;top:2px" width="11" height="15" viewBox="0 0 11 15"><rect x="0.600" y="0.600" width="9.800" height="13.800" rx="2" fill="#fff" stroke="#1a6ab0" stroke-width="1.100"/><path d="M4 4.500h3M4 7.500h3" stroke="#1a6ab0" stroke-width="1"/></svg>
<div class="c" style="left:0px;width:141px;text-align:left;padding-left:22px;"><span class="w" style="width:54px;"><span class="s" style="transform:scaleX(0.899)">2025.08.21</span></span><span class="w" style="width:3px;"> </span><span class="w" style="width:42px;"><span class="s" style="transform:scaleX(0.899)">01:05:00</span></span></div>
<div class="c" style="left:142px;width:96px;"><span class="w" style="width:38px;"><span class="s" style="transform:scaleX(0.982)">xauusd</span></span></div>
<div class="c" style="left:239px;width:75px;text-align:left;padding-left:6px;"><span class="w" style="width:66px;"><span class="s" style="transform:scaleX(0.899)">53009541360</span></span></div>
<div class="c" style="left:315px;width:64px;"><span class="w" style="width:20px;"><span class="s" style="transform:scaleX(1.034)">buy</span></span></div>
<div class="c" style="left:380px;width:107px;padding-right:3.500px;"><span class="w" style="width:15px;"><span class="s" style="transform:scaleX(0.899)">0.2</span></span></div>
<div class="c" style="left:488px;width:107px;padding-right:3.500px;"><span class="w" style="width:39px;"><span class="s" style="transform:scaleX(0.899)">3350.00</span></span></div>
<div class="c" style="left:596px;width:107px;padding-right:3.500px;"><span class="w" style="width:39px;"><span class="s" style="transform:scaleX(0.899)">3310.00</span></span></div>
<div class="c tp" style="left:704px;width:107px;padding-right:3.500px;"><span class="w" style="width:39px;"><span class="s" style="transform:scaleX(0.899)">3390.00</span></span></div>
<div class="c" style="left:812px;width:139px;padding-right:3.500px;"><span class="w" style="width:54px;"><span class="s" style="transform:scaleX(0.899)">2025.08.26</span></span><span class="w" style="width:3px;"> </span><span class="w" style="width:42px;"><span class="s" style="transform:scaleX(0.899)">22:48:13</span></span></div>
<div class="c" style="left:952px;width:107px;padding-right:3.500px;"><span class="w" style="width:39px;"><span class="s" style="transform:scaleX(0.899)">3390.00</span></span></div>
<div class="c red" style="left:1060px;width:107px;padding-right:3.500px;"><span class="w" style="width:26px;"><span class="s" style="transform:scaleX(0.951)">-7.56</span></span></div>
<div class="c blue" style="left:1168px;width:149px;padding-right:4.500px;"><span class="w" style="width:33px;"><span class="s" style="transform:scaleX(0.899)">800.00</span></span></div>
<div class="v" style="left:141px"></div>
<div class="v" style="left:238px"></div>
<div class="v" style="left:314px"></div>
<div class="v" style="left:379px"></div>
<div class="v" style="left:487px"></div>
<div class="v" style="left:595px"></div>
<div class="v" style="left:703px"></div>
<div class="v" style="left:811px"></div>
<div class="v" style="left:951px"></div>
<div class="v" style="left:1059px"></div>
<div class="v" style="left:1167px"></div>
</div>
<div class="row alt" style="top:84px">
<svg style="left:5px;top:2px" width="11" height="15" viewBox="0 0 11 15"><rect x="0.600" y="0.600" width="9.800" height="13.800" rx="2" fill="#fff" stroke="#1a6ab0" stroke-width="1.100"/><path d="M4 4.500h3M4 7.500h3" stroke="#1a6ab0" stroke-width="1"/></svg>
<div class="c" style="left:0px;width:141px;text-align:left;padding-left:22px;"><span class="w" style="width:54px;"><span class="s" style="transform:scaleX(0.899)">2025.08.28</span></span><span class="w" style="width:3px;"> </span><span class="w" style="width:42px;"><span class="s" style="transform:scaleX(0.917)">11:41:28</span></span></div>
<div class="c" style="left:142px;width:96px;"><span class="w" style="width:38px;"><span class="s" style="transform:scaleX(0.982)">xauusd</span></span></div>
<div class="c" style="left:239px;width:75px;text-align:left;padding-left:6px;"><span class="w" style="width:66px;"><span class="s" style="transform:scaleX(0.899)">53064699901</span></span></div>
<div class="c" style="left:315px;width:64px;"><span class="w" style="width:20px;"><span class="s" style="transform:scaleX(1.034)">buy</span></span></div>
<div class="c" style="left:380px;width:107px;padding-right:3.500px;"><span class="w" style="width:15px;"><span class="s" style="transform:scaleX(0.899)">0.3</span></span></div>
<div class="c" style="left:488px;width:107px;padding-right:3.500px;"><span class="w" style="width:39px;"><span class="s" style="transform:scaleX(0.899)">3400.00</span></span></div>
<div class="c" style="left:596px;width:107px;padding-right:3.500px;"><span class="w" style="width:39px;"><span class="s" style="transform:scaleX(0.899)">3360.00</span></span></div>
<div class="c tp" style="left:704px;width:107px;padding-right:3.500px;"><span class="w" style="width:39px;"><span class="s" style="transform:scaleX(0.899)">3440.00</span></span></div>
<div class="c" style="left:812px;width:139px;padding-right:3.500px;"><span class="w" style="width:54px;"><span class="s" style="transform:scaleX(0.899)">2025.08.29</span></span><span class="w" style="width:3px;"> </span><span class="w" style="width:42px;"><span class="s" style="transform:scaleX(0.899)">17:39:27</span></span></div>
<div class="c" style="left:952px;width:107px;padding-right:3.500px;"><span class="w" style="width:39px;"><span class="s" style="transform:scaleX(0.899)">3440.00</span></span></div>
<div class="c red" style="left:1060px;width:107px;padding-right:3.500px;"><span class="w" style="width:26px;"><span class="s" style="transform:scaleX(0.951)">-3.78</span></span></div>
<div class="c blue" style="left:1168px;width:149px;padding-right:4.500px;"><span class="w" style="width:6px;"><span class="s" style="transform:scaleX(0.899)">1</span></span><span class="w" style="width:3px;"> </span><span class="w" style="width:33px;"><span class="s" style="transform:scaleX(0.899)">200.00</span></span></div>
<div class="v" style="left:141px"></div>
<div class="v" style="left:238px"></div>
<div class="v" style="left:314px"></div>
<div class="v" style="left:379px"></div>
<div class="v" style="left:487px"></div>
<div class="v" style="left:595px"></div>
<div class="v" style="left:703px"></div>
<div class="v" style="left:811px"></div>
<div class="v" style="left:951px"></div>
<div class="v" style="left:1059px"></div>
<div class="v" style="left:1167px"></div>
</div>
<div class="row" style="top:104px">
<svg style="left:5px;top:2px" width="11" height="15" viewBox="0 0 11 15"><rect x="0.600" y="0.600" width="9.800" height="13.800" rx="2" fill="#fff" stroke="#1a6ab0" stroke-width="1.100"/><path d="M4 4.500h3M4 7.500h3" stroke="#1a6ab0" stroke-width="1"/></svg>
<div class="c" style="left:0px;width:141px;text-align:left;padding-left:22px;"><span class="w" style="width:54px;"><span class="s" style="transform:scaleX(0.899)">2025.08.28</span></span><span class="w" style="width:3px;"> </span><span class="w" style="width:42px;"><span class="s" style="transform:scaleX(0.899)">21:54:05</span></span></div>
<div class="c" style="left:142px;width:96px;"><span class="w" style="width:38px;"><span class="s" style="transform:scaleX(0.982)">xauusd</span></span></div>
<div class="c" style="left:239px;width:75px;text-align:left;padding-left:6px;"><span class="w" style="width:66px;"><span class="s" style="transform:scaleX(0.899)">53074300208</span></span></div>
<div class="c" style="left:315px;width:64px;"><span class="w" style="width:20px;"><span class="s" style="transform:scaleX(1.034)">buy</span></span></div>
<div class="c" style="left:380px;width:107px;padding-right:3.500px;"><span class="w" style="width:15px;"><span class="s" style="transform:scaleX(0.899)">0.3</span></span></div>
<div class="c" style="left:488px;width:107px;padding-right:3.500px;"><span class="w" style="width:39px;"><span class="s" style="transform:scaleX(0.899)">3420.00</span></span></div>
<div class="c" style="left:596px;width:107px;padding-right:3.500px;"><span class="w" style="width:39px;"><span class="s" style="transform:scaleX(0.899)">3380.00</span></span></div>
<div class="c tp" style="left:704px;width:107px;padding-right:3.500px;"><span class="w" style="width:39px;"><span class="s" style="transform:scaleX(0.899)">3460.00</span></span></div>
<div class="c" style="left:812px;width:139px;padding-right:3.500px;"><span class="w" style="width:54px;"><span class="s" style="transform:scaleX(0.899)">2025.09.01</span></span><span class="w" style="width:3px;"> </span><span class="w" style="width:42px;"><span class="s" style="transform:scaleX(0.899)">05:06:20</span></span></div>
<div class="c" style="left:952px;width:107px;padding-right:3.500px;"><span class="w" style="width:39px;"><span class="s" style="transform:scaleX(0.899)">3460.00</span></span></div>
<div class="c red" style="left:1060px;width:107px;padding-right:3.500px;"><span class="w" style="width:26px;"><span class="s" style="transform:scaleX(0.951)">-7.56</span></span></div>
<div class="c blue" style="left:1168px;width:149px;padding-right:4.500px;"><span class="w" style="width:6px;"><span class="s" style="transform:scaleX(0.899)">1</span></span><span class="w" style="width:3px;"> </span><span class="w" style="width:33px;"><span class="s" style="transform:scaleX(0.899)">200.00</span></span></div>
<div class="v" style="left:141px"></div>
<div class="v" style="left:238px"></div>
<div class="v" style="left:314px"></div>
<div class="v" style="left:379px"></div>
<div class="v" style="left:487px"></div>
<div class="v" style="left:595px"></div>
<div class="v" style="left:703px"></div>
<div class="v" style="left:811px"></div>
<div class="v" style="left:951px"></div>
<div class="v" style="left:1059px"></div>
<div class="v" style="left:1167px"></div>
</div>
<div class="row alt" style="top:124px">
<svg style="left:5px;top:2px" width="11" height="15" viewBox="0 0 11 15"><rect x="0.600" y="0.600" width="9.800" height="13.800" rx="2" fill="#fff" stroke="#1a6ab0" stroke-width="1.100"/><path d="M4 4.500h3M4 7.500h3" stroke="#1a6ab0" stroke-width="1"/></svg>
<div class="c" style="left:0px;width:141px;text-align:left;padding-left:22px;"><span class="w" style="width:54px;"><span class="s" style="transform:scaleX(0.899)">2025.09.02</span></span><span class="w" style="width:3px;"> </span><span class="w" style="width:42px;"><span class="s" style="transform:scaleX(0.899)">04:16:33</span></span></div>
<div class="c" style="left:142px;width:96px;"><span class="w" style="width:38px;"><span class="s" style="transform:scaleX(0.982)">xauusd</span></span></div>
<div class="c" style="left:239px;width:75px;text-align:left;padding-left:6px;"><span class="w" style="width:66px;"><span class="s" style="transform:scaleX(0.899)">53092922369</span></span></div>
<div class="c" style="left:315px;width:64px;"><span class="w" style="width:20px;"><span class="s" style="transform:scaleX(1.034)">buy</span></span></div>
<div class="c" style="left:380px;width:107px;padding-right:3.500px;"><span class="w" style="width:15px;"><span class="s" style="transform:scaleX(0.899)">0.4</span></span></div>
<div class="c" style="left:488px;width:107px;padding-right:3.500px;"><span class="w" style="width:39px;"><span class="s" style="transform:scaleX(0.899)">3490.00</span></span></div>
<div class="c" style="left:596px;width:107px;padding-right:3.500px;"><span class="w" style="width:39px;"><span class="s" style="transform:scaleX(0.899)">3450.00</span></span></div>
<div class="c tp" style="left:704px;width:107px;padding-right:3.500px;"><span class="w" style="width:39px;"><span class="s" style="transform:scaleX(0.899)">3530.00</span></span></div>
<div class="c" style="left:812px;width:139px;padding-right:3.500px;"><span class="w" style="width:54px;"><span class="s" style="transform:scaleX(0.899)">2025.09.02</span></span><span class="w" style="width:3px;"> </span><span class="w" style="width:42px;"><span class="s" style="transform:scaleX(0.899)">20:30:49</span></span></div>
<div class="c" style="left:952px;width:107px;padding-right:3.500px;"><span class="w" style="width:39px;"><span class="s" style="transform:scaleX(0.899)">3530.00</span></span></div>
<div class="c red" style="left:1060px;width:107px;padding-right:3.500px;"></div>
<div class="c blue" style="left:1168px;width:149px;padding-right:4.500px;"><span class="w" style="width:6px;"><span class="s" style="transform:scaleX(0.899)">1</span></span><span class="w" style="width:3px;"> </span><span class="w" style="width:33px;"><span class="s" style="transform:scaleX(0.899)">600.00</span></span></div>
<div class="v" style="left:141px"></div>
<div class="v" style="left:238px"></div>
<div class="v" style="left:314px"></div>
<div class="v" style="left:379px"></div>
<div class="v" style="left:487px"></div>
<div class="v" style="left:595px"></div>
<div class="v" style="left:703px"></div>
<div class="v" style="left:811px"></div>
<div class="v" style="left:951px"></div>
<div class="v" style="left:1059px"></div>
<div class="v" style="left:1167px"></div>
</div>
<div class="row" style="top:144px">
<svg style="left:5px;top:2px" width="11" height="15" viewBox="0 0 11 15"><rect x="0.600" y="0.600" width="9.800" height="13.800" rx="2" fill="#fff" stroke="#1a6ab0" stroke-width="1.100"/><path d="M4 4.500h3M4 7.500h3" stroke="#1a6ab0" stroke-width="1"/></svg>
<div class="c" style="left:0px;width:141px;text-align:left;padding-left:22px;"><span class="w" style="width:54px;"><span class="s" style="transform:scaleX(0.899)">2025.09.02</span></span><span class="w" style="width:3px;"> </span><span class="w" style="width:42px;"><span class="s" style="transform:scaleX(0.899)">20:30:48</span></span></div>
<div class="c" style="left:142px;width:96px;"><span class="w" style="width:38px;"><span class="s" style="transform:scaleX(0.982)">xauusd</span></span></div>
<div class="c" style="left:239px;width:75px;text-align:left;padding-left:6px;"><span class="w" style="width:66px;"><span class="s" style="transform:scaleX(0.899)">53101319491</span></span></div>
<div class="c" style="left:315px;width:64px;"><span class="w" style="width:20px;"><span class="s" style="transform:scaleX(1.034)">buy</span></span></div>
<div class="c" style="left:380px;width:107px;padding-right:3.500px;"><span class="w" style="width:15px;"><span class="s" style="transform:scaleX(0.899)">0.4</span></span></div>
<div class="c" style="left:488px;width:107px;padding-right:3.500px;"><span class="w" style="width:39px;"><span class="s" style="transform:scaleX(0.899)">3530.00</span></span></div>
<div class="c" style="left:596px;width:107px;padding-right:3.500px;"><span class="w" style="width:39px;"><span class="s" style="transform:scaleX(0.899)">3490.00</span></span></div>
<div class="c tp" style="left:704px;width:107px;padding-right:3.500px;"><span class="w" style="width:39px;"><span class="s" style="transform:scaleX(0.899)">3570.00</span></span></div>
<div class="c" style="left:812px;width:139px;padding-right:3.500px;"><span class="w" style="width:54px;"><span class="s" style="transform:scaleX(0.899)">2025.09.03</span></span><span class="w" style="width:3px;"> </span><span class="w" style="width:42px;"><span class="s" style="transform:scaleX(0.899)">19:55:40</span></span></div>
<div class="c" style="left:952px;width:107px;padding-right:3.500px;"><span class="w" style="width:39px;"><span class="s" style="transform:scaleX(0.899)">3570.00</span></span></div>
<div class="c red" style="left:1060px;width:107px;padding-right:3.500px;"><span class="w" style="width:26px;"><span class="s" style="transform:scaleX(0.951)">-5.04</span></span></div>
<div class="c blue" style="left:1168px;width:149px;padding-right:4.500px;"><span class="w" style="width:6px;"><span class="s" style="transform:scaleX(0.899)">1</span></span><span class="w" style="width:3px;"> </span><span class="w" style="width:33px;"><span class="s" style="transform:scaleX(0.899)">600.00</span></span></div>
<div class="v" style="left:141px"></div>
<div class="v" style="left:238px"></div>
<div class="v" style="left:314px"></div>
<div class="v" style="left:379px"></div>
<div class="v" style="left:487px"></div>
<div class="v" style="left:595px"></div>
<div class="v" style="left:703px"></div>
<div class="v" style="left:811px"></div>
<div class="v" style="left:951px"></div>
<div class="v" style="left:1059px"></div>
<div class="v" style="left:1167px"></div>
</div>
<div class="row alt" style="top:164px">
<svg style="left:5px;top:2px" width="11" height="15" viewBox="0 0 11 15"><rect x="0.600" y="0.600" width="9.800" height="13.800" rx="2" fill="#fff" stroke="#1a6ab0" stroke-width="1.100"/><path d="M4 4.500h3M4 7.500h3" stroke="#1a6ab0" stroke-width="1"/></svg>
<div class="c" style="left:0px;width:141px;text-align:left;padding-left:22px;"><span class="w" style="width:54px;"><span class="s" style="transform:scaleX(0.899)">2025.09.03</span></span><span class="w" style="width:3px;"> </span><span class="w" style="width:42px;"><span class="s" style="transform:scaleX(0.899)">19:47:53</span></span></div>
<div class="c" style="left:142px;width:96px;"><span class="w" style="width:38px;"><span class="s" style="transform:scaleX(0.982)">xauusd</span></span></div>
<div class="c" style="left:239px;width:75px;text-align:left;padding-left:6px;"><span class="w" style="width:66px;"><span class="s" style="transform:scaleX(0.910)">53112708180</span></span></div>
<div class="c" style="left:315px;width:64px;"><span class="w" style="width:20px;"><span class="s" style="transform:scaleX(1.034)">buy</span></span></div>
<div class="c" style="left:380px;width:107px;padding-right:3.500px;"><span class="w" style="width:15px;"><span class="s" style="transform:scaleX(0.899)">0.4</span></span></div>
<div class="c" style="left:488px;width:107px;padding-right:3.500px;"><span class="w" style="width:39px;"><span class="s" style="transform:scaleX(0.899)">3570.00</span></span></div>
<div class="c sl" style="left:596px;width:107px;padding-right:3.500px;"><span class="w" style="width:39px;"><span class="s" style="transform:scaleX(0.899)">3530.00</span></span></div>
<div class="c" style="left:704px;width:107px;padding-right:3.500px;"><span class="w" style="width:39px;"><span class="s" style="transform:scaleX(0.899)">3610.00</span></span></div>
<div class="c" style="left:812px;width:139px;padding-right:3.500px;"><span class="w" style="width:54px;"><span class="s" style="transform:scaleX(0.899)">2025.09.04</span></span><span class="w" style="width:3px;"> </span><span class="w" style="width:42px;"><span class="s" style="transform:scaleX(0.899)">05:50:13</span></span></div>
<div class="c" style="left:952px;width:107px;padding-right:3.500px;"><span class="w" style="width:39px;"><span class="s" style="transform:scaleX(0.899)">3530.00</span></span></div>
<div class="c red" style="left:1060px;width:107px;padding-right:3.500px;"><span class="w" style="width:32px;"><span class="s" style="transform:scaleX(0.940)">-15.12</span></span></div>
<div class="c red" style="left:1168px;width:149px;padding-right:4.500px;"><span class="w" style="width:11px;"><span class="s" style="transform:scaleX(1.031)">-1</span></span><span class="w" style="width:3px;"> </span><span class="w" style="width:33px;"><span class="s" style="transform:scaleX(0.899)">600.00</span></span></div>
<div class="v" style="left:141px"></div>
<div class="v" style="left:238px"></div>
<div class="v" style="left:314px"></div>
<div class="v" style="left:379px"></div>
<div class="v" style="left:487px"></div>
<div class="v" style="left:595px"></div>
<div class="v" style="left:703px"></div>
<div class="v" style="left:811px"></div>
<div class="v" style="left:951px"></div>
<div class="v" style="left:1059px"></div>
<div class="v" style="left:1167px"></div>
</div>
<div class="row" style="top:184px">
<svg style="left:5px;top:2px" width="11" height="15" viewBox="0 0 11 15"><rect x="0.600" y="0.600" width="9.800" height="13.800" rx="2" fill="#fff" stroke="#1a6ab0" stroke-width="1.100"/><path d="M4 4.500h3M4 7.500h3" stroke="#1a6ab0" stroke-width="1"/></svg>
<div class="c" style="left:0px;width:141px;text-align:left;padding-left:22px;"><span class="w" style="width:54px;"><span class="s" style="transform:scaleX(0.899)">2025.09.05</span></span><span class="w" style="width:3px;"> </span><span class="w" style="width:42px;"><span class="s" style="transform:scaleX(0.899)">08:02:26</span></span></div>
<div class="c" style="left:142px;width:96px;"><span class="w" style="width:38px;"><span class="s" style="transform:scaleX(0.982)">xauusd</span></span></div>
<div class="c" style="left:239px;width:75px;text-align:left;padding-left:6px;"><span class="w" style="width:66px;"><span class="s" style="transform:scaleX(0.899)">53123801610</span></span></div>
<div class="c" style="left:315px;width:64px;"><span class="w" style="width:20px;"><span class="s" style="transform:scaleX(1.034)">buy</span></span></div>
<div class="c" style="left:380px;width:107px;padding-right:3.500px;"><span class="w" style="width:15px;"><span class="s" style="transform:scaleX(0.899)">0.4</span></span></div>
<div class="c" style="left:488px;width:107px;padding-right:3.500px;"><span class="w" style="width:39px;"><span class="s" style="transform:scaleX(0.899)">3560.00</span></span></div>
<div class="c" style="left:596px;width:107px;padding-right:3.500px;"><span class="w" style="width:39px;"><span class="s" style="transform:scaleX(0.899)">3520.00</span></span></div>
<div class="c tp" style="left:704px;width:107px;padding-right:3.500px;"><span class="w" style="width:39px;"><span class="s" style="transform:scaleX(0.899)">3600.00</span></span></div>
<div class="c" style="left:812px;width:139px;padding-right:3.500px;"><span class="w" style="width:54px;"><span class="s" style="transform:scaleX(0.899)">2025.09.05</span></span><span class="w" style="width:3px;"> </span><span class="w" style="width:42px;"><span class="s" style="transform:scaleX(0.899)">19:25:03</span></span></div>
<div class="c" style="left:952px;width:107px;padding-right:3.500px;"><span class="w" style="width:39px;"><span class="s" style="transform:scaleX(0.899)">3600.00</span></span></div>
<div class="c red" style="left:1060px;width:107px;padding-right:3.500px;"></div>
<div class="c blue" style="left:1168px;width:149px;padding-right:4.500px;"><span class="w" style="width:6px;"><span class="s" style="transform:scaleX(0.899)">1</span></span><span class="w" style="width:3px;"> </span><span class="w" style="width:33px;"><span class="s" style="transform:scaleX(0.899)">600.00</span></span></div>
<div class="v" style="left:141px"></div>
<div class="v" style="left:238px"></div>
<div class="v" style="left:314px"></div>
<div class="v" style="left:379px"></div>
<div class="v" style="left:487px"></div>
<div class="v" style="left:595px"></div>
<div class="v" style="left:703px"></div>
<div class="v" style="left:811px"></div>
<div class="v" style="left:951px"></div>
<div class="v" style="left:1059px"></div>
<div class="v" style="left:1167px"></div>
</div>
<div class="row alt" style="top:204px">
<svg style="left:5px;top:2px" width="11" height="15" viewBox="0 0 11 15"><rect x="0.600" y="0.600" width="9.800" height="13.800" rx="2" fill="#fff" stroke="#1a6ab0" stroke-width="1.100"/><path d="M4 4.500h3M4 7.500h3" stroke="#1a6ab0" stroke-width="1"/></svg>
<div class="c" style="left:0px;width:141px;text-align:left;padding-left:22px;"><span class="w" style="width:54px;"><span class="s" style="transform:scaleX(0.899)">2025.09.08</span></span><span class="w" style="width:3px;"> </span><span class="w" style="width:42px;"><span class="s" style="transform:scaleX(0.899)">13:14:55</span></span></div>
<div class="c" style="left:142px;width:96px;"><span class="w" style="width:38px;"><span class="s" style="transform:scaleX(0.982)">xauusd</span></span></div>
<div class="c" style="left:239px;width:75px;text-align:left;padding-left:6px;"><span class="w" style="width:66px;"><span class="s" style="transform:scaleX(0.899)">53146472771</span></span></div>
<div class="c" style="left:315px;width:64px;"><span class="w" style="width:20px;"><span class="s" style="transform:scaleX(1.034)">buy</span></span></div>
<div class="c" style="left:380px;width:107px;padding-right:3.500px;"><span class="w" style="width:15px;"><span class="s" style="transform:scaleX(0.899)">0.5</span></span></div>
<div class="c" style="left:488px;width:107px;padding-right:3.500px;"><span class="w" style="width:39px;"><span class="s" style="transform:scaleX(0.899)">3620.00</span></span></div>
<div class="c" style="left:596px;width:107px;padding-right:3.500px;"><span class="w" style="width:39px;"><span class="s" style="transform:scaleX(0.899)">3580.00</span></span></div>
<div class="c tp" style="left:704px;width:107px;padding-right:3.500px;"><span class="w" style="width:39px;"><span class="s" style="transform:scaleX(0.899)">3660.00</span></span></div>
<div class="c" style="left:812px;width:139px;padding-right:3.500px;"><span class="w" style="width:54px;"><span class="s" style="transform:scaleX(0.899)">2025.09.09</span></span><span class="w" style="width:3px;"> </span><span class="w" style="width:42px;"><span class="s" style="transform:scaleX(0.899)">16:27:30</span></span></div>
<div class="c" style="left:952px;width:107px;padding-right:3.500px;"><span class="w" style="width:39px;"><span class="s" style="transform:scaleX(0.899)">3660.00</span></span></div>
<div class="c red" style="left:1060px;width:107px;padding-right:3.500px;"><span class="w" style="width:26px;"><span class="s" style="transform:scaleX(0.951)">-6.30</span></span></div>
<div class="c blue" style="left:1168px;width:149px;padding-right:4.500px;"><span class="w" style="width:6px;"><span class="s" style="transform:scaleX(0.899)">2</span></span><span class="w" style="width:3px;"> </span><span class="w" style="width:33px;"><span class="s" style="transform:scaleX(0.899)">000.00</span></span></div>
<div class="v" style="left:141px"></div>
<div class="v" style="left:238px"></div>
<div class="v" style="left:314px"></div>
<div class="v" style="left:379px"></div>
<div class="v" style="left:487px"></div>
<div class="v" style="left:595px"></div>
<div class="v" style="left:703px"></div>
<div class="v" style="left:811px"></div>
<div class="v" style="left:951px"></div>
<div class="v" style="left:1059px"></div>
<div class="v" style="left:1167px"></div>
</div>
<div class="row" style="top:224px">
<svg style="left:5px;top:2px" width="11" height="15" viewBox="0 0 11 15"><rect x="0.600" y="0.600" width="9.800" height="13.800" rx="2" fill="#fff" stroke="#1a6ab0" stroke-width="1.100"/><path d="M4 4.500h3M4 7.500h3" stroke="#1a6ab0" stroke-width="1"/></svg>
<div class="c" style="left:0px;width:141px;text-align:left;padding-left:22px;"><span class="w" style="width:54px;"><span class="s" style="transform:scaleX(0.899)">2025.09.09</span></span><span class="w" style="width:3px;"> </span><span class="w" style="width:42px;"><span class="s" style="transform:scaleX(0.899)">16:27:06</span></span></div>
<div class="c" style="left:142px;width:96px;"><span class="w" style="width:38px;"><span class="s" style="transform:scaleX(0.982)">xauusd</span></span></div>
<div class="c" style="left:239px;width:75px;text-align:left;padding-left:6px;"><span class="w" style="width:66px;"><span class="s" style="transform:scaleX(0.899)">53159743367</span></span></div>
<div class="c" style="left:315px;width:64px;"><span class="w" style="width:20px;"><span class="s" style="transform:scaleX(1.034)">buy</span></span></div>
<div class="c" style="left:380px;width:107px;padding-right:3.500px;"><span class="w" style="width:15px;"><span class="s" style="transform:scaleX(0.899)">0.5</span></span></div>
<div class="c" style="left:488px;width:107px;padding-right:3.500px;"><span class="w" style="width:39px;"><span class="s" style="transform:scaleX(0.899)">3660.00</span></span></div>
<div class="c sl" style="left:596px;width:107px;padding-right:3.500px;"><span class="w" style="width:39px;"><span class="s" style="transform:scaleX(0.899)">3620.00</span></span></div>
<div class="c" style="left:704px;width:107px;padding-right:3.500px;"><span class="w" style="width:39px;"><span class="s" style="transform:scaleX(0.899)">3700.00</span></span></div>
<div class="c" style="left:812px;width:139px;padding-right:3.500px;"><span class="w" style="width:54px;"><span class="s" style="transform:scaleX(0.913)">2025.09.11</span></span><span class="w" style="width:3px;"> </span><span class="w" style="width:42px;"><span class="s" style="transform:scaleX(0.899)">12:13:19</span></span></div>
<div class="c" style="left:952px;width:107px;padding-right:3.500px;"><span class="w" style="width:39px;"><span class="s" style="transform:scaleX(0.899)">3620.00</span></span></div>
<div class="c red" style="left:1060px;width:107px;padding-right:3.500px;"><span class="w" style="width:32px;"><span class="s" style="transform:scaleX(0.940)">-25.20</span></span></div>
<div class="c red" style="left:1168px;width:149px;padding-right:4.500px;"><span class="w" style="width:11px;"><span class="s" style="transform:scaleX(1.031)">-2</span></span><span class="w" style="width:3px;"> </span><span class="w" style="width:33px;"><span class="s" style="transform:scaleX(0.899)">000.00</span></span></div>
<div class="v" style="left:141px"></div>
<div class="v" style="left:238px"></div>
<div class="v" style="left:314px"></div>
<div class="v" style="left:379px"></div>
<div class="v" style="left:487px"></div>
<div class="v" style="left:595px"></div>
<div class="v" style="left:703px"></div>
<div class="v" style="left:811px"></div>
<div class="v" style="left:951px"></div>
<div class="v" style="left:1059px"></div>
<div class="v" style="left:1167px"></div>
</div>
<div class="row alt" style="top:244px">
<svg style="left:5px;top:2px" width="11" height="15" viewBox="0 0 11 15"><rect x="0.600" y="0.600" width="9.800" height="13.800" rx="2" fill="#fff" stroke="#e03030" stroke-width="1.100"/><path d="M4 4.500h3M4 7.500h3" stroke="#e03030" stroke-width="1"/></svg>
<div class="c" style="left:0px;width:141px;text-align:left;padding-left:22px;"><span class="w" style="width:54px;"><span class="s" style="transform:scaleX(0.899)">2025.09.09</span></span><span class="w" style="width:3px;"> </span><span class="w" style="width:42px;"><span class="s" style="transform:scaleX(0.899)">18:16:12</span></span></div>
<div class="c" style="left:142px;width:96px;"><span class="w" style="width:38px;"><span class="s" style="transform:scaleX(0.982)">xauusd</span></span></div>
<div class="c" style="left:239px;width:75px;text-align:left;padding-left:6px;"><span class="w" style="width:66px;"><span class="s" style="transform:scaleX(0.899)">53146488488</span></span></div>
<div class="c" style="left:315px;width:64px;"><span class="w" style="width:17px;"><span class="s" style="transform:scaleX(0.944)">sell</span></span></div>
<div class="c" style="left:380px;width:107px;padding-right:3.500px;"><span class="w" style="width:15px;"><span class="s" style="transform:scaleX(0.899)">0.5</span></span></div>
<div class="c" style="left:488px;width:107px;padding-right:3.500px;"><span class="w" style="width:39px;"><span class="s" style="transform:scaleX(0.899)">3630.00</span></span></div>
<div class="c sl" style="left:596px;width:107px;padding-right:3.500px;"><span class="w" style="width:39px;"><span class="s" style="transform:scaleX(0.899)">3670.00</span></span></div>
<div class="c" style="left:704px;width:107px;padding-right:3.500px;"><span class="w" style="width:39px;"><span class="s" style="transform:scaleX(0.899)">3590.00</span></span></div>
<div class="c" style="left:812px;width:139px;padding-right:3.500px;"><span class="w" style="width:54px;"><span class="s" style="transform:scaleX(0.899)">2025.09.15</span></span><span class="w" style="width:3px;"> </span><span class="w" style="width:42px;"><span class="s" style="transform:scaleX(0.899)">18:47:26</span></span></div>
<div class="c" style="left:952px;width:107px;padding-right:3.500px;"><span class="w" style="width:39px;"><span class="s" style="transform:scaleX(0.899)">3670.00</span></span></div>
<div class="c red" style="left:1060px;width:107px;padding-right:3.500px;"><span class="w" style="width:32px;"><span class="s" style="transform:scaleX(0.940)">-13.80</span></span></div>
<div class="c red" style="left:1168px;width:149px;padding-right:4.500px;"><span class="w" style="width:11px;"><span class="s" style="transform:scaleX(1.031)">-2</span></span><span class="w" style="width:3px;"> </span><span class="w" style="width:33px;"><span class="s" style="transform:scaleX(0.899)">000.00</span></span></div>
<div class="v" style="left:141px"></div>
<div class="v" style="left:238px"></div>
<div class="v" style="left:314px"></div>
<div class="v" style="left:379px"></div>
<div class="v" style="left:487px"></div>
<div class="v" style="left:595px"></div>
<div class="v" style="left:703px"></div>
<div class="v" style="left:811px"></div>
<div class="v" style="left:951px"></div>
<div class="v" style="left:1059px"></div>
<div class="v" style="left:1167px"></div>
</div>
<div class="row" style="top:264px">
<svg style="left:5px;top:2px" width="11" height="15" viewBox="0 0 11 15"><rect x="0.600" y="0.600" width="9.800" height="13.800" rx="2" fill="#fff" stroke="#1a6ab0" stroke-width="1.100"/><path d="M4 4.500h3M4 7.500h3" stroke="#1a6ab0" stroke-width="1"/></svg>
<div class="c" style="left:0px;width:141px;text-align:left;padding-left:22px;"><span class="w" style="width:54px;"><span class="s" style="transform:scaleX(0.913)">2025.09.11</span></span><span class="w" style="width:3px;"> </span><span class="w" style="width:42px;"><span class="s" style="transform:scaleX(0.899)">15:32:57</span></span></div>
<div class="c" style="left:142px;width:96px;"><span class="w" style="width:38px;"><span class="s" style="transform:scaleX(0.982)">xauusd</span></span></div>
<div class="c" style="left:239px;width:75px;text-align:left;padding-left:6px;"><span class="w" style="width:66px;"><span class="s" style="transform:scaleX(0.910)">53184801197</span></span></div>
<div class="c" style="left:315px;width:64px;"><span class="w" style="width:20px;"><span class="s" style="transform:scaleX(1.034)">buy</span></span></div>
<div class="c" style="left:380px;width:107px;padding-right:3.500px;"><span class="w" style="width:15px;"><span class="s" style="transform:scaleX(0.899)">0.5</span></span></div>
<div class="c" style="left:488px;width:107px;padding-right:3.500px;"><span class="w" style="width:39px;"><span class="s" style="transform:scaleX(0.899)">3640.00</span></span></div>
<div class="c" style="left:596px;width:107px;padding-right:3.500px;"><span class="w" style="width:39px;"><span class="s" style="transform:scaleX(0.899)">3600.00</span></span></div>
<div class="c tp" style="left:704px;width:107px;padding-right:3.500px;"><span class="w" style="width:39px;"><span class="s" style="transform:scaleX(0.899)">3680.00</span></span></div>
<div class="c" style="left:812px;width:139px;padding-right:3.500px;"><span class="w" style="width:54px;"><span class="s" style="transform:scaleX(0.899)">2025.09.15</span></span><span class="w" style="width:3px;"> </span><span class="w" style="width:42px;"><span class="s" style="transform:scaleX(0.899)">18:57:46</span></span></div>
<div class="c" style="left:952px;width:107px;padding-right:3.500px;"><span class="w" style="width:39px;"><span class="s" style="transform:scaleX(0.899)">3680.00</span></span></div>
<div class="c red" style="left:1060px;width:107px;padding-right:3.500px;"><span class="w" style="width:32px;"><span class="s" style="transform:scaleX(0.940)">-12.60</span></span></div>
<div class="c blue" style="left:1168px;width:149px;padding-right:4.500px;"><span class="w" style="width:6px;"><span class="s" style="transform:scaleX(0.899)">2</span></span><span class="w" style="width:3px;"> </span><span class="w" style="width:33px;"><span class="s" style="transform:scaleX(0.899)">000.00</span></span></div>
<div class="v" style="left:141px"></div>
<div class="v" style="left:238px"></div>
<div class="v" style="left:314px"></div>
<div class="v" style="left:379px"></div>
<div class="v" style="left:487px"></div>
<div class="v" style="left:595px"></div>
<div class="v" style="left:703px"></div>
<div class="v" style="left:811px"></div>
<div class="v" style="left:951px"></div>
<div class="v" style="left:1059px"></div>
<div class="v" style="left:1167px"></div>
</div>
<div class="row alt" style="top:284px">
<svg style="left:5px;top:2px" width="11" height="15" viewBox="0 0 11 15"><rect x="0.600" y="0.600" width="9.800" height="13.800" rx="2" fill="#fff" stroke="#1a6ab0" stroke-width="1.100"/><path d="M4 4.500h3M4 7.500h3" stroke="#1a6ab0" stroke-width="1"/></svg>
<div class="c" style="left:0px;width:141px;text-align:left;padding-left:22px;"><span class="w" style="width:54px;"><span class="s" style="transform:scaleX(0.899)">2025.09.15</span></span><span class="w" style="width:3px;"> </span><span class="w" style="width:42px;"><span class="s" style="transform:scaleX(0.899)">18:57:34</span></span></div>
<div class="c" style="left:142px;width:96px;"><span class="w" style="width:38px;"><span class="s" style="transform:scaleX(0.982)">xauusd</span></span></div>
<div class="c" style="left:239px;width:75px;text-align:left;padding-left:6px;"><span class="w" style="width:66px;"><span class="s" style="transform:scaleX(0.899)">53213887353</span></span></div>
<div class="c" style="left:315px;width:64px;"><span class="w" style="width:20px;"><span class="s" style="transform:scaleX(1.034)">buy</span></span></div>
<div class="c" style="left:380px;width:107px;padding-right:3.500px;"><span class="w" style="width:15px;"><span class="s" style="transform:scaleX(0.899)">0.5</span></span></div>
<div class="c" style="left:488px;width:107px;padding-right:3.500px;"><span class="w" style="width:39px;"><span class="s" style="transform:scaleX(0.899)">3680.00</span></span></div>
<div class="c sl" style="left:596px;width:107px;padding-right:3.500px;"><span class="w" style="width:39px;"><span class="s" style="transform:scaleX(0.899)">3640.00</span></span></div>
<div class="c" style="left:704px;width:107px;padding-right:3.500px;"><span class="w" style="width:39px;"><span class="s" style="transform:scaleX(0.899)">3720.00</span></span></div>
<div class="c" style="left:812px;width:139px;padding-right:3.500px;"><span class="w" style="width:54px;"><span class="s" style="transform:scaleX(0.899)">2025.09.18</span></span><span class="w" style="width:3px;"> </span><span class="w" style="width:42px;"><span class="s" style="transform:scaleX(0.899)">09:10:20</span></span></div>
<div class="c" style="left:952px;width:107px;padding-right:3.500px;"><span class="w" style="width:39px;"><span class="s" style="transform:scaleX(0.899)">3640.00</span></span></div>
<div class="c red" style="left:1060px;width:107px;padding-right:3.500px;"><span class="w" style="width:32px;"><span class="s" style="transform:scaleX(0.940)">-31.50</span></span></div>
<div class="c red" style="left:1168px;width:149px;padding-right:4.500px;"><span class="w" style="width:11px;"><span class="s" style="transform:scaleX(1.031)">-2</span></span><span class="w" style="width:3px;"> </span><span class="w" style="width:33px;"><span class="s" style="transform:scaleX(0.899)">000.00</span></span></div>
<div class="v" style="left:141px"></div>
<div class="v" style="left:238px"></div>
<div class="v" style="left:314px"></div>
<div class="v" style="left:379px"></div>
<div class="v" style="left:487px"></div>
<div class="v" style="left:595px"></div>
<div class="v" style="left:703px"></div>
<div class="v" style="left:811px"></div>
<div class="v" style="left:951px"></div>
<div class="v" style="left:1059px"></div>
<div class="v" style="left:1167px"></div>
</div>
<div class="row" style="top:304px">
<svg style="left:5px;top:2px" width="11" height="15" viewBox="0 0 11 15"><rect x="0.600" y="0.600" width="9.800" height="13.800" rx="2" fill="#fff" stroke="#e03030" stroke-width="1.100"/><path d="M4 4.500h3M4 7.500h3" stroke="#e03030" stroke-width="1"/></svg>
<div class="c" style="left:0px;width:141px;text-align:left;padding-left:22px;"><span class="w" style="width:54px;"><span class="s" style="transform:scaleX(0.899)">2025.09.16</span></span><span class="w" style="width:3px;"> </span><span class="w" style="width:42px;"><span class="s" style="transform:scaleX(0.899)">18:33:48</span></span></div>
<div class="c" style="left:142px;width:96px;"><span class="w" style="width:38px;"><span class="s" style="transform:scaleX(0.982)">xauusd</span></span></div>
<div class="c" style="left:239px;width:75px;text-align:left;padding-left:6px;"><span class="w" style="width:66px;"><span class="s" style="transform:scaleX(0.899)">53227192063</span></span></div>
<div class="c" style="left:315px;width:64px;"><span class="w" style="width:17px;"><span class="s" style="transform:scaleX(0.944)">sell</span></span></div>
<div class="c" style="left:380px;width:107px;padding-right:3.500px;"><span class="w" style="width:15px;"><span class="s" style="transform:scaleX(0.899)">0.5</span></span></div>
<div class="c" style="left:488px;width:107px;padding-right:3.500px;"><span class="w" style="width:39px;"><span class="s" style="transform:scaleX(0.899)">3680.00</span></span></div>
<div class="c" style="left:596px;width:107px;padding-right:3.500px;"><span class="w" style="width:39px;"><span class="s" style="transform:scaleX(0.899)">3720.00</span></span></div>
<div class="c tp" style="left:704px;width:107px;padding-right:3.500px;"><span class="w" style="width:39px;"><span class="s" style="transform:scaleX(0.899)">3640.00</span></span></div>
<div class="c" style="left:812px;width:139px;padding-right:3.500px;"><span class="w" style="width:54px;"><span class="s" style="transform:scaleX(0.899)">2025.09.18</span></span><span class="w" style="width:3px;"> </span><span class="w" style="width:42px;"><span class="s" style="transform:scaleX(0.899)">09:10:24</span></span></div>
<div class="c" style="left:952px;width:107px;padding-right:3.500px;"><span class="w" style="width:39px;"><span class="s" style="transform:scaleX(0.899)">3640.00</span></span></div>
<div class="c red" style="left:1060px;width:107px;padding-right:3.500px;"><span class="w" style="width:26px;"><span class="s" style="transform:scaleX(0.951)">-9.20</span></span></div>
<div class="c blue" style="left:1168px;width:149px;padding-right:4.500px;"><span class="w" style="width:6px;"><span class="s" style="transform:scaleX(0.899)">2</span></span><span class="w" style="width:3px;"> </span><span class="w" style="width:33px;"><span class="s" style="transform:scaleX(0.899)">000.00</span></span></div>
<div class="v" style="left:141px"></div>
<div class="v" style="left:238px"></div>
<div class="v" style="left:314px"></div>
<div class="v" style="left:379px"></div>
<div class="v" style="left:487px"></div>
<div class="v" style="left:595px"></div>
<div class="v" style="left:703px"></div>
<div class="v" style="left:811px"></div>
<div class="v" style="left:951px"></div>
<div class="v" style="left:1059px"></div>
<div class="v" style="left:1167px"></div>
</div>
<div class="row alt" style="top:324px">
<svg style="left:5px;top:2px" width="11" height="15" viewBox="0 0 11 15"><rect x="0.600" y="0.600" width="9.800" height="13.800" rx="2" fill="#fff" stroke="#e03030" stroke-width="1.100"/><path d="M4 4.500h3M4 7.500h3" stroke="#e03030" stroke-width="1"/></svg>
<div class="c" style="left:0px;width:141px;text-align:left;padding-left:22px;"><span class="w" style="width:54px;"><span class="s" style="transform:scaleX(0.899)">2025.09.18</span></span><span class="w" style="width:3px;"> </span><span class="w" style="width:42px;"><span class="s" style="transform:scaleX(0.899)">09:10:20</span></span></div>
<div class="c" style="left:142px;width:96px;"><span class="w" style="width:38px;"><span class="s" style="transform:scaleX(0.982)">xauusd</span></span></div>
<div class="c" style="left:239px;width:75px;text-align:left;padding-left:6px;"><span class="w" style="width:66px;"><span class="s" style="transform:scaleX(0.899)">53239995195</span></span></div>
<div class="c" style="left:315px;width:64px;"><span class="w" style="width:17px;"><span class="s" style="transform:scaleX(0.944)">sell</span></span></div>
<div class="c" style="left:380px;width:107px;padding-right:3.500px;"><span class="w" style="width:15px;"><span class="s" style="transform:scaleX(0.899)">0.5</span></span></div>
<div class="c" style="left:488px;width:107px;padding-right:3.500px;"><span class="w" style="width:39px;"><span class="s" style="transform:scaleX(0.899)">3640.00</span></span></div>
<div class="c sl" style="left:596px;width:107px;padding-right:3.500px;"><span class="w" style="width:39px;"><span class="s" style="transform:scaleX(0.899)">3680.00</span></span></div>
<div class="c" style="left:704px;width:107px;padding-right:3.500px;"><span class="w" style="width:39px;"><span class="s" style="transform:scaleX(0.899)">3600.00</span></span></div>
<div class="c" style="left:812px;width:139px;padding-right:3.500px;"><span class="w" style="width:54px;"><span class="s" style="transform:scaleX(0.899)">2025.09.19</span></span><span class="w" style="width:3px;"> </span><span class="w" style="width:42px;"><span class="s" style="transform:scaleX(0.899)">21:00:42</span></span></div>
<div class="c" style="left:952px;width:107px;padding-right:3.500px;"><span class="w" style="width:39px;"><span class="s" style="transform:scaleX(0.899)">3680.00</span></span></div>
<div class="c red" style="left:1060px;width:107px;padding-right:3.500px;"><span class="w" style="width:26px;"><span class="s" style="transform:scaleX(0.951)">-2.30</span></span></div>
<div class="c red" style="left:1168px;width:149px;padding-right:4.500px;"><span class="w" style="width:11px;"><span class="s" style="transform:scaleX(1.031)">-2</span></span><span class="w" style="width:3px;"> </span><span class="w" style="width:33px;"><span class="s" style="transform:scaleX(0.899)">000.00</span></span></div>
<div class="v" style="left:141px"></div>
<div class="v" style="left:238px"></div>
<div class="v" style="left:314px"></div>
<div class="v" style="left:379px"></div>
<div class="v" style="left:487px"></div>
<div class="v" style="left:595px"></div>
<div class="v" style="left:703px"></div>
<div class="v" style="left:811px"></div>
<div class="v" style="left:951px"></div>
<div class="v" style="left:1059px"></div>
<div class="v" style="left:1167px"></div>
</div>
<div class="row" style="top:344px">
<svg style="left:5px;top:2px" width="11" height="15" viewBox="0 0 11 15"><rect x="0.600" y="0.600" width="9.800" height="13.800" rx="2" fill="#fff" stroke="#1a6ab0" stroke-width="1.100"/><path d="M4 4.500h3M4 7.500h3" stroke="#1a6ab0" stroke-width="1"/></svg>
<div class="c" style="left:0px;width:141px;text-align:left;padding-left:22px;"><span class="w" style="width:54px;"><span class="s" style="transform:scaleX(0.899)">2025.09.19</span></span><span class="w" style="width:3px;"> </span><span class="w" style="width:42px;"><span class="s" style="transform:scaleX(0.899)">21:00:42</span></span></div>
<div class="c" style="left:142px;width:96px;"><span class="w" style="width:38px;"><span class="s" style="transform:scaleX(0.982)">xauusd</span></span></div>
<div class="c" style="left:239px;width:75px;text-align:left;padding-left:6px;"><span class="w" style="width:66px;"><span class="s" style="transform:scaleX(0.899)">53227157744</span></span></div>
<div class="c" style="left:315px;width:64px;"><span class="w" style="width:20px;"><span class="s" style="transform:scaleX(1.034)">buy</span></span></div>
<div class="c" style="left:380px;width:107px;padding-right:3.500px;"><span class="w" style="width:15px;"><span class="s" style="transform:scaleX(0.899)">0.5</span></span></div>
<div class="c" style="left:488px;width:107px;padding-right:3.500px;"><span class="w" style="width:39px;"><span class="s" style="transform:scaleX(0.899)">3680.00</span></span></div>
<div class="c" style="left:596px;width:107px;padding-right:3.500px;"><span class="w" style="width:39px;"><span class="s" style="transform:scaleX(0.899)">3640.00</span></span></div>
<div class="c tp" style="left:704px;width:107px;padding-right:3.500px;"><span class="w" style="width:39px;"><span class="s" style="transform:scaleX(0.899)">3720.00</span></span></div>
<div class="c" style="left:812px;width:139px;padding-right:3.500px;"><span class="w" style="width:54px;"><span class="s" style="transform:scaleX(0.899)">2025.09.22</span></span><span class="w" style="width:3px;"> </span><span class="w" style="width:42px;"><span class="s" style="transform:scaleX(0.917)">11:36:27</span></span></div>
<div class="c" style="left:952px;width:107px;padding-right:3.500px;"><span class="w" style="width:39px;"><span class="s" style="transform:scaleX(0.899)">3720.00</span></span></div>
<div class="c red" style="left:1060px;width:107px;padding-right:3.500px;"><span class="w" style="width:26px;"><span class="s" style="transform:scaleX(0.951)">-6.30</span></span></div>
<div class="c blue" style="left:1168px;width:149px;padding-right:4.500px;"><span class="w" style="width:6px;"><span class="s" style="transform:scaleX(0.899)">2</span></span><span class="w" style="width:3px;"> </span><span class="w" style="width:33px;"><span class="s" style="transform:scaleX(0.899)">000.00</span></span></div>
<div class="v" style="left:141px"></div>
<div class="v" style="left:238px"></div>
<div class="v" style="left:314px"></div>
<div class="v" style="left:379px"></div>
<div class="v" style="left:487px"></div>
<div class="v" style="left:595px"></div>
<div class="v" style="left:703px"></div>
<div class="v" style="left:811px"></div>
<div class="v" style="left:951px"></div>
<div class="v" style="left:1059px"></div>
<div class="v" style="left:1167px"></div>
</div>
<div class="row alt" style="top:364px">
<svg style="left:5px;top:2px" width="11" height="15" viewBox="0 0 11 15"><rect x="0.600" y="0.600" width="9.800" height="13.800" rx="2" fill="#fff" stroke="#1a6ab0" stroke-width="1.100"/><path d="M4 4.500h3M4 7.500h3" stroke="#1a6ab0" stroke-width="1"/></svg>
<div class="c" style="left:0px;width:141px;text-align:left;padding-left:22px;"><span class="w" style="width:54px;"><span class="s" style="transform:scaleX(0.899)">2025.09.22</span></span><span class="w" style="width:3px;"> </span><span class="w" style="width:42px;"><span class="s" style="transform:scaleX(0.917)">18:28:11</span></span></div>
<div class="c" style="left:142px;width:96px;"><span class="w" style="width:38px;"><span class="s" style="transform:scaleX(0.982)">xauusd</span></span></div>
<div class="c" style="left:239px;width:75px;text-align:left;padding-left:6px;"><span class="w" style="width:66px;"><span class="s" style="transform:scaleX(0.899)">53280492076</span></span></div>
<div class="c" style="left:315px;width:64px;"><span class="w" style="width:20px;"><span class="s" style="transform:scaleX(1.034)">buy</span></span></div>
<div class="c" style="left:380px;width:107px;padding-right:3.500px;"><span class="w" style="width:15px;"><span class="s" style="transform:scaleX(0.899)">0.5</span></span></div>
<div class="c" style="left:488px;width:107px;padding-right:3.500px;"><span class="w" style="width:39px;"><span class="s" style="transform:scaleX(0.899)">3730.00</span></span></div>
<div class="c" style="left:596px;width:107px;padding-right:3.500px;"><span class="w" style="width:39px;"><span class="s" style="transform:scaleX(0.899)">3690.00</span></span></div>
<div class="c tp" style="left:704px;width:107px;padding-right:3.500px;"><span class="w" style="width:39px;"><span class="s" style="transform:scaleX(0.899)">3770.00</span></span></div>
<div class="c" style="left:812px;width:139px;padding-right:3.500px;"><span class="w" style="width:54px;"><span class="s" style="transform:scaleX(0.899)">2025.09.23</span></span><span class="w" style="width:3px;"> </span><span class="w" style="width:42px;"><span class="s" style="transform:scaleX(0.917)">11:44:13</span></span></div>
<div class="c" style="left:952px;width:107px;padding-right:3.500px;"><span class="w" style="width:39px;"><span class="s" style="transform:scaleX(0.899)">3770.00</span></span></div>
<div class="c red" style="left:1060px;width:107px;padding-right:3.500px;"><span class="w" style="width:26px;"><span class="s" style="transform:scaleX(0.951)">-6.30</span></span></div>
<div class="c blue" style="left:1168px;width:149px;padding-right:4.500px;"><span class="w" style="width:6px;"><span class="s" style="transform:scaleX(0.899)">2</span></span><span class="w" style="width:3px;"> </span><span class="w" style="width:33px;"><span class="s" style="transform:scaleX(0.899)">000.00</span></span></div>
<div class="v" style="left:141px"></div>
<div class="v" style="left:238px"></div>
<div class="v" style="left:314px"></div>
<div class="v" style="left:379px"></div>
<div class="v" style="left:487px"></div>
<div class="v" style="left:595px"></div>
<div class="v" style="left:703px"></div>
<div class="v" style="left:811px"></div>
<div class="v" style="left:951px"></div>
<div class="v" style="left:1059px"></div>
<div class="v" style="left:1167px"></div>
</div>
<div class="row" style="top:384px">
<svg style="left:5px;top:2px" width="11" height="15" viewBox="0 0 11 15"><rect x="0.600" y="0.600" width="9.800" height="13.800" rx="2" fill="#fff" stroke="#e03030" stroke-width="1.100"/><path d="M4 4.500h3M4 7.500h3" stroke="#e03030" stroke-width="1"/></svg>
<div class="c" style="left:0px;width:141px;text-align:left;padding-left:22px;"><span class="w" style="width:54px;"><span class="s" style="transform:scaleX(0.899)">2025.09.24</span></span><span class="w" style="width:3px;"> </span><span class="w" style="width:42px;"><span class="s" style="transform:scaleX(0.917)">19:03:11</span></span></div>
<div class="c" style="left:142px;width:96px;"><span class="w" style="width:38px;"><span class="s" style="transform:scaleX(0.982)">xauusd</span></span></div>
<div class="c" style="left:239px;width:75px;text-align:left;padding-left:6px;"><span class="w" style="width:66px;"><span class="s" style="transform:scaleX(0.899)">53293493893</span></span></div>
<div class="c" style="left:315px;width:64px;"><span class="w" style="width:17px;"><span class="s" style="transform:scaleX(0.944)">sell</span></span></div>
<div class="c" style="left:380px;width:107px;padding-right:3.500px;"><span class="w" style="width:15px;"><span class="s" style="transform:scaleX(0.899)">0.5</span></span></div>
<div class="c" style="left:488px;width:107px;padding-right:3.500px;"><span class="w" style="width:39px;"><span class="s" style="transform:scaleX(0.899)">3740.00</span></span></div>
<div class="c sl" style="left:596px;width:107px;padding-right:3.500px;"><span class="w" style="width:39px;"><span class="s" style="transform:scaleX(0.899)">3780.00</span></span></div>
<div class="c" style="left:704px;width:107px;padding-right:3.500px;"><span class="w" style="width:39px;"><span class="s" style="transform:scaleX(0.899)">3700.00</span></span></div>
<div class="c" style="left:812px;width:139px;padding-right:3.500px;"><span class="w" style="width:54px;"><span class="s" style="transform:scaleX(0.899)">2025.09.26</span></span><span class="w" style="width:3px;"> </span><span class="w" style="width:42px;"><span class="s" style="transform:scaleX(0.917)">17:23:11</span></span></div>
<div class="c" style="left:952px;width:107px;padding-right:3.500px;"><span class="w" style="width:39px;"><span class="s" style="transform:scaleX(0.899)">3780.00</span></span></div>
<div class="c red" style="left:1060px;width:107px;padding-right:3.500px;"><span class="w" style="width:26px;"><span class="s" style="transform:scaleX(0.951)">-9.20</span></span></div>
<div class="c red" style="left:1168px;width:149px;padding-right:4.500px;"><span class="w" style="width:11px;"><span class="s" style="transform:scaleX(1.031)">-2</span></span><span class="w" style="width:3px;"> </span><span class="w" style="width:33px;"><span class="s" style="transform:scaleX(0.899)">000.00</span></span></div>
<div class="v" style="left:141px"></div>
<div class="v" style="left:238px"></div>
<div class="v" style="left:314px"></div>
<div class="v" style="left:379px"></div>
<div class="v" style="left:487px"></div>
<div class="v" style="left:595px"></div>
<div class="v" style="left:703px"></div>
<div class="v" style="left:811px"></div>
<div class="v" style="left:951px"></div>
<div class="v" style="left:1059px"></div>
<div class="v" style="left:1167px"></div>
</div>
<div style="left:0;top:403px;width:1317px;height:20px;background:#c9c9c9"></div>
<svg style="left:4.900px;top:407.800px" width="11" height="11" viewBox="0 0 11 11"><circle cx="5.500" cy="5.500" r="4.800" fill="none" stroke="#000" stroke-width="1.300"/><path d="M3 5.500h5M5.500 3v5" stroke="#000" stroke-width="1.300"/></svg>
<div class="c" style="left:22px;top:404px;text-align:left;width:700px"><span class="w" style="width:47px;font-weight:bold;"><span class="s" style="transform:scaleX(1.007)">Profitto:</span></span><span class="w" style="width:3px;"> </span><span class="w" style="width:7px;font-weight:bold;"><span class="s" style="transform:scaleX(1.049)">5</span></span><span class="w" style="width:3px;"> </span><span class="w" style="width:38px;font-weight:bold;"><span class="s" style="transform:scaleX(1.035)">433.64</span></span><span class="w" style="width:6px;">  </span><span class="w" style="width:45px;font-weight:bold;"><span class="s" style="transform:scaleX(0.978)">Credito:</span></span><span class="w" style="width:3px;"> </span><span class="w" style="width:24px;font-weight:bold;"><span class="s" style="transform:scaleX(1.028)">0.00</span></span><span class="w" style="width:6px;">  </span><span class="w" style="width:53px;font-weight:bold;"><span class="s" style="transform:scaleX(0.958)">Deposito:</span></span><span class="w" style="width:3px;"> </span><span class="w" style="width:14px;font-weight:bold;"><span class="s" style="transform:scaleX(1.049)">10</span></span><span class="w" style="width:3px;"> </span><span class="w" style="width:38px;font-weight:bold;"><span class="s" style="transform:scaleX(1.035)">000.00</span></span><span class="w" style="width:6px;">  </span><span class="w" style="width:49px;font-weight:bold;"><span class="s" style="transform:scaleX(0.967)">Prelievo:</span></span><span class="w" style="width:3px;"> </span><span class="w" style="width:24px;font-weight:bold;"><span class="s" style="transform:scaleX(1.028)">0.00</span></span><span class="w" style="width:6px;">  </span><span class="w" style="width:47px;font-weight:bold;"><span class="s" style="transform:scaleX(0.928)">Bilancio:</span></span><span class="w" style="width:3px;"> </span><span class="w" style="width:14px;font-weight:bold;"><span class="s" style="transform:scaleX(1.049)">15</span></span><span class="w" style="width:3px;"> </span><span class="w" style="width:38px;font-weight:bold;"><span class="s" style="transform:scaleX(1.035)">433.64</span></span></div>
<div class="c" style="left:1059px;width:108px;top:404px;padding-right:5.500px"><span class="w" style="width:43px;font-weight:bold;"><span class="s" style="transform:scaleX(1.056)">-166.36</span></span></div>
<div class="c" style="left:1168px;width:149px;top:404px;padding-right:5px"><span class="w" style="width:7px;font-weight:bold;"><span class="s" style="transform:scaleX(1.049)">5</span></span><span class="w" style="width:3px;"> </span><span class="w" style="width:38px;font-weight:bold;"><span class="s" style="transform:scaleX(1.035)">600.00</span></span></div>
</div>
<div id="gridbg" class="abs"></div>
<svg class="abs" style="left:35px;top:155px" width="10" height="9" viewBox="0 0 10 9"><path d="M1.500 1.500l7 6.500M8.500 1.500l-7 6.500" stroke="#000" stroke-width="1.600" fill="none"/></svg>
</body></html>
